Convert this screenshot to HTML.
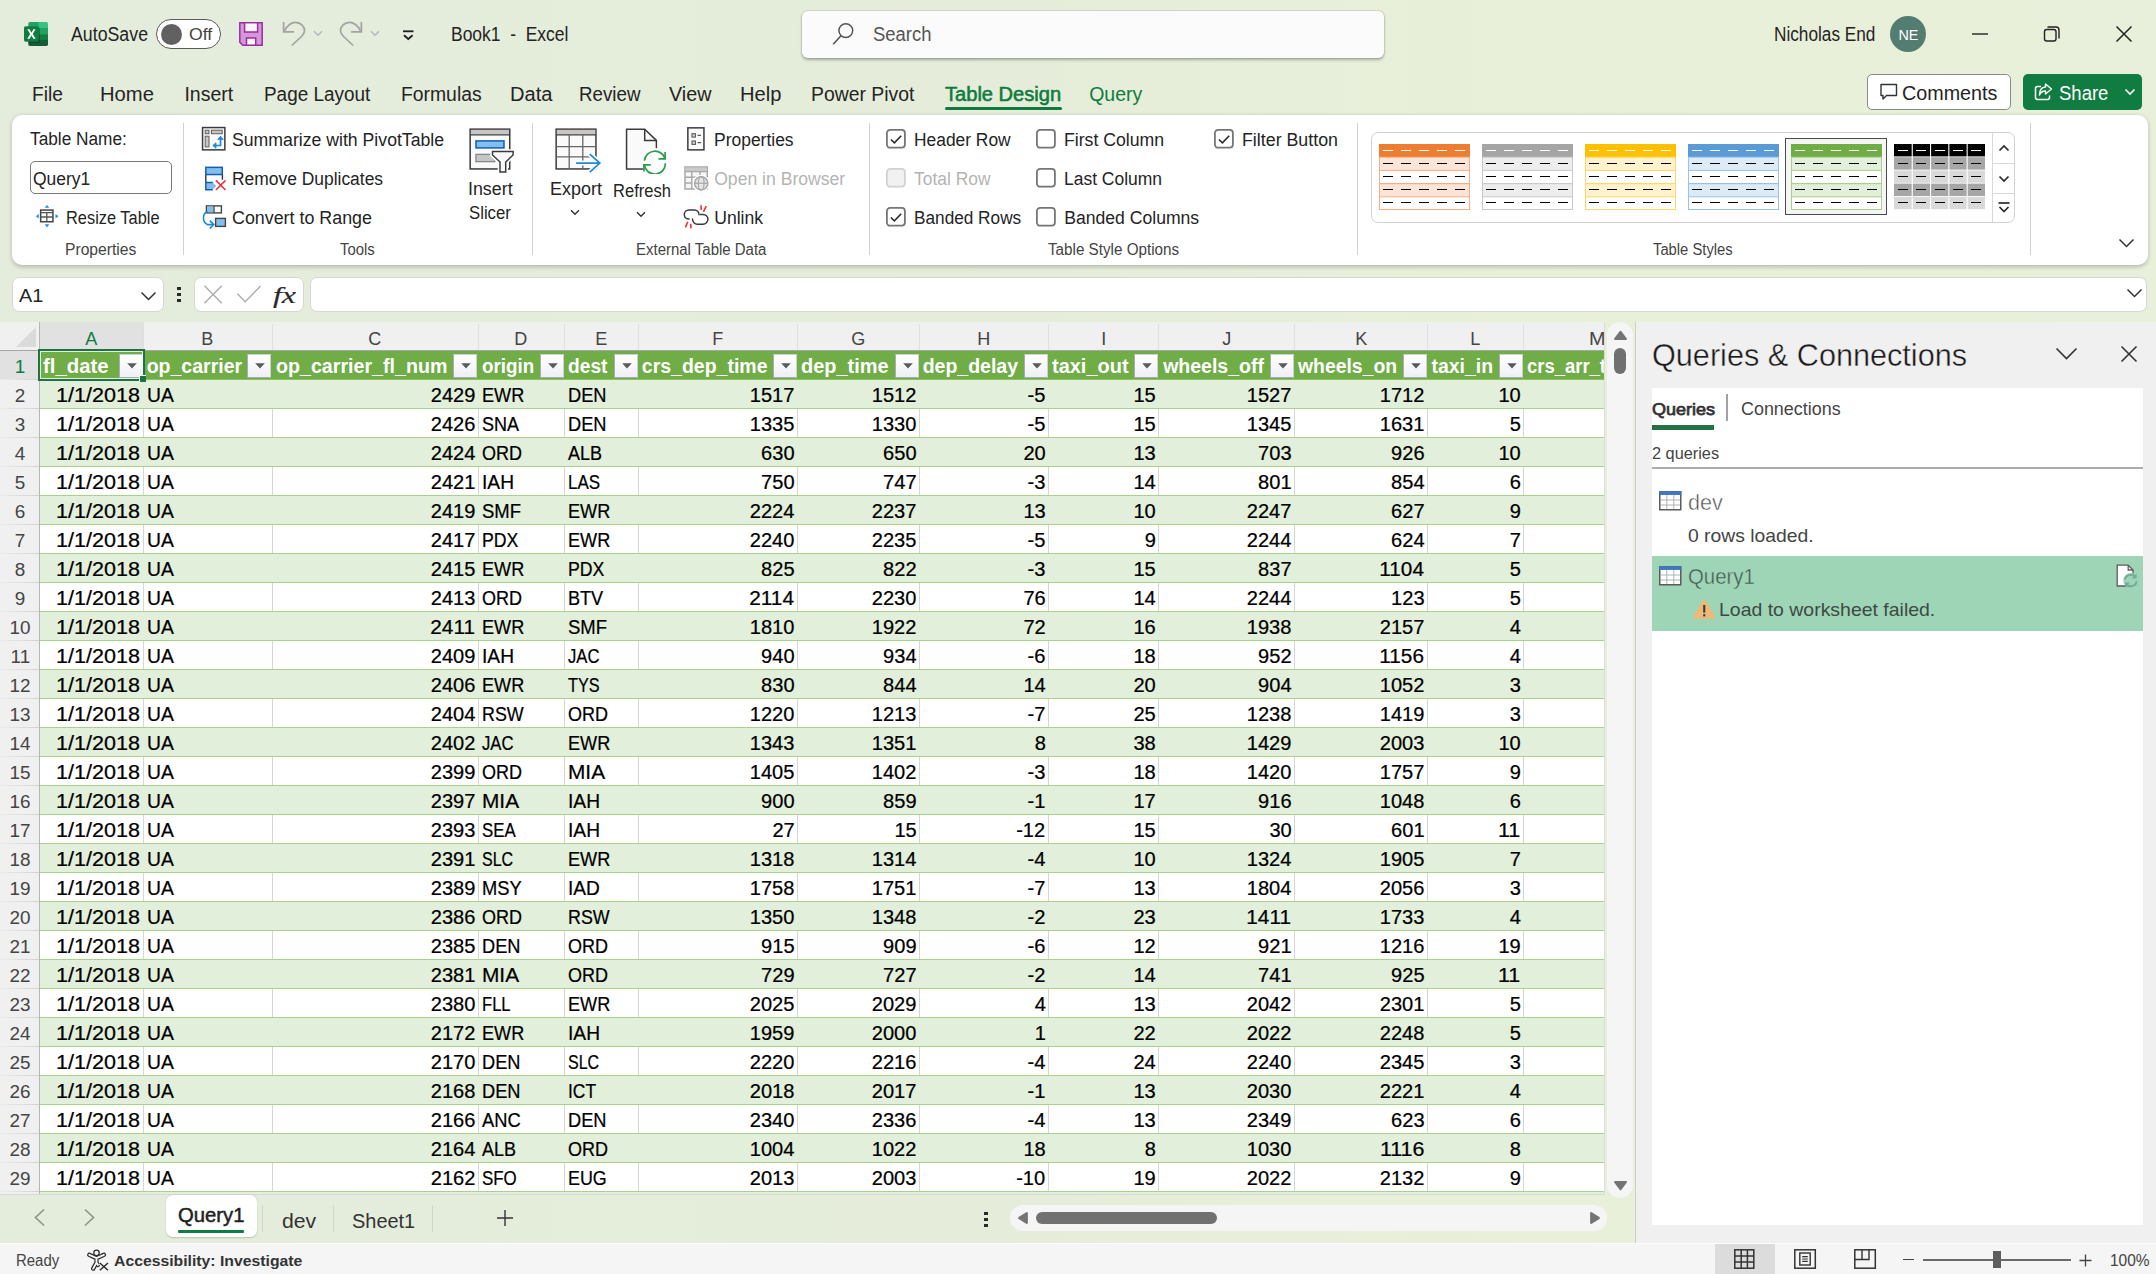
<!DOCTYPE html>
<html><head><meta charset="utf-8"><title>Book1 - Excel</title><style>html,body{margin:0;padding:0}
body{width:2156px;height:1274px;position:relative;overflow:hidden;background:linear-gradient(90deg,#e4ecdc 0%,#e5edda 45%,#e9f0d9 75%,#e8efda 100%);font-family:"Liberation Sans",sans-serif;}
.a{position:absolute;display:block}
.t{position:absolute;white-space:pre;display:block}
</style></head><body>
<svg class="a" style="left:24px;top:22px;" width="24" height="24" viewBox="0 0 24 24"><path d="M6 0 H14.9 V6 H4.3 V1.7 Q4.3 0 6 0 Z" fill="#21a366"/><path d="M14.9 0 H22.3 Q24 0 24 1.7 V6 H14.9 Z" fill="#33c481"/>
<rect x="4.3" y="6" width="10.6" height="6.1" fill="#107c41"/><rect x="14.9" y="6" width="9.1" height="6.1" fill="#21a366"/>
<rect x="4.3" y="12.1" width="10.6" height="6.1" fill="#185c37"/><rect x="14.9" y="12.1" width="9.1" height="6.1" fill="#107c41"/>
<path d="M4.3 17.9 H24 V22.3 Q24 24 22.3 24 H6 Q4.3 24 4.3 22.3 Z" fill="#185c37"/>
<path d="M4.3 5.3 H14.3 Q16 5.3 16 7 V19 Q16 20.7 14.3 20.7 H4.3 Z" fill="#000" opacity=".28"/>
<rect x="0" y="4.3" width="15" height="15.4" rx="1.7" fill="#107c41"/>
<path d="M3.3 7.3 H5.6 L7.5 10.7 L9.4 7.3 H11.6 L8.7 12 L11.7 16.8 H9.4 L7.5 13.4 L5.6 16.8 H3.2 L6.2 12 Z" fill="#fff"/></svg>
<span class="t" style="left:70.80px;top:25px;font-size:19.5px;line-height:19.5px;color:#242424;transform:scaleX(0.9106);transform-origin:0 50%;">AutoSave</span>
<div class="a" style="left:156px;top:19px;width:65px;height:30px;background:#fff;border:1.2px solid #5a5a5a;border-radius:15px;box-sizing:border-box;"></div>
<div class="a" style="left:161px;top:23.5px;width:21px;height:21px;background:#616161;border-radius:50%;"></div>
<span class="t" style="left:188.60px;top:27px;font-size:15.8px;line-height:15.8px;color:#444;transform:scaleX(1.1163);transform-origin:0 50%;">Off</span>
<svg class="a" style="left:239px;top:22px;" width="24" height="24" viewBox="0 0 24 24"><path d="M0.8 0.7 H23.2 V23.2 H3.8 L0.8 20.2 Z" fill="#d696dc" stroke="#9a2e9e" stroke-width="1.5" stroke-linejoin="miter"/>
<rect x="5.6" y="0.7" width="13" height="9.3" fill="#f8f6f8" stroke="#9a2e9e" stroke-width="1.5"/>
<rect x="7.5" y="16" width="9.2" height="7.2" fill="#f8f6f8" stroke="#9a2e9e" stroke-width="1.5"/></svg>
<svg class="a" style="left:282px;top:21px;" width="26" height="26" viewBox="0 0 26 26"><path d="M1.6 0.9 V10.8 H12" fill="none" stroke="#a3a3a3" stroke-width="1.7"/>
<path d="M2.3 10.2 C5 4.2 10 1.3 13.5 1.4 C19 1.6 22.8 5.6 22.5 10 C22.3 12.4 21 14 19.5 15.5 L9.8 24.5" fill="none" stroke="#a3a3a3" stroke-width="1.7"/></svg>
<svg class="a" style="left:313px;top:30px;" width="10" height="7" viewBox="0 0 10 7"><path d="M1 1.3 L5 5.3 L9 1.3" fill="none" stroke="#b9b4bb" stroke-width="1.4"/></svg>
<svg class="a" style="left:339px;top:21px;" width="26" height="26" viewBox="0 0 26 26"><path d="M22.4 0.9 V10.8 H12" fill="none" stroke="#a3a3a3" stroke-width="1.7"/>
<path d="M21.7 10.2 C19 4.2 14 1.3 10.5 1.4 C5 1.6 1.2 5.6 1.5 10 C1.7 12.4 3 14 4.5 15.5 L14.2 24.5" fill="none" stroke="#a3a3a3" stroke-width="1.7"/></svg>
<svg class="a" style="left:370px;top:30px;" width="10" height="7" viewBox="0 0 10 7"><path d="M1 1.3 L5 5.3 L9 1.3" fill="none" stroke="#b9b4bb" stroke-width="1.4"/></svg>
<svg class="a" style="left:401px;top:29px;" width="14" height="12" viewBox="0 0 14 12"><path d="M2 2.3 H12.5" stroke="#1f1f1f" stroke-width="1.8"/><path d="M3 6.3 L7.3 10 L11.6 6.3" fill="none" stroke="#1f1f1f" stroke-width="1.8"/></svg>
<span class="t" style="left:451.40px;top:25px;font-size:19.5px;line-height:19.5px;color:#242424;transform:scaleX(0.8952);transform-origin:0 50%;">Book1  -  Excel</span>
<div class="a" style="left:801.5px;top:10.5px;width:582px;height:47px;background:#fbfbfb;border-radius:6px;box-shadow:0 0 0 1px rgba(0,0,0,.06),0 1.5px 3px rgba(0,0,0,.28);"></div>
<svg class="a" style="left:831px;top:22px;" width="24" height="24" viewBox="0 0 24 24"><circle cx="14.8" cy="8.6" r="6.9" fill="none" stroke="#555" stroke-width="1.5"/><path d="M10 13.7 L2.2 22.3" stroke="#555" stroke-width="1.6"/></svg>
<span class="t" style="left:873.40px;top:25px;font-size:19.5px;line-height:19.5px;color:#555;transform:scaleX(0.9452);transform-origin:0 50%;">Search</span>
<span class="t" style="left:1773.90px;top:25px;font-size:19.5px;line-height:19.5px;color:#242424;transform:scaleX(0.8825);transform-origin:0 50%;">Nicholas End</span>
<div class="a" style="left:1890px;top:16px;width:36px;height:36px;background:#547d72;border-radius:50%;"></div>
<span class="t" style="left:1897.58px;top:27px;font-size:15px;line-height:15px;color:#fff;transform:scaleX(0.9598);transform-origin:50% 50%;">NE</span>
<svg class="a" style="left:1970px;top:24px;" width="20" height="20" viewBox="0 0 20 20"><path d="M2 10 H18" stroke="#222" stroke-width="1.4"/></svg>
<svg class="a" style="left:2042px;top:24px;" width="20" height="20" viewBox="0 0 20 20"><rect x="2.5" y="5.5" width="11.5" height="11.5" rx="2.2" fill="none" stroke="#222" stroke-width="1.4"/><path d="M5.5 3 H14 Q17 3 17 6 V14.5" fill="none" stroke="#222" stroke-width="1.4"/></svg>
<svg class="a" style="left:2114px;top:24px;" width="20" height="20" viewBox="0 0 20 20"><path d="M2.5 2.5 L17.5 17.5 M17.5 2.5 L2.5 17.5" stroke="#222" stroke-width="1.5"/></svg>
<span class="t" style="left:31.90px;top:85px;font-size:19.5px;line-height:19.5px;color:#242424;transform:scaleX(0.9834);transform-origin:0 50%;">File</span>
<span class="t" style="left:100.40px;top:85px;font-size:19.5px;line-height:19.5px;color:#242424;transform:scaleX(1.0362);transform-origin:0 50%;">Home</span>
<span class="t" style="left:184.40px;top:85px;font-size:19.5px;line-height:19.5px;color:#242424;">Insert</span>
<span class="t" style="left:264.40px;top:85px;font-size:19.5px;line-height:19.5px;color:#242424;transform:scaleX(0.9698);transform-origin:0 50%;">Page Layout</span>
<span class="t" style="left:401.40px;top:85px;font-size:19.5px;line-height:19.5px;color:#242424;transform:scaleX(0.9918);transform-origin:0 50%;">Formulas</span>
<span class="t" style="left:510.40px;top:85px;font-size:19.5px;line-height:19.5px;color:#242424;transform:scaleX(1.0294);transform-origin:0 50%;">Data</span>
<span class="t" style="left:579.40px;top:85px;font-size:19.5px;line-height:19.5px;color:#242424;transform:scaleX(0.9603);transform-origin:0 50%;">Review</span>
<span class="t" style="left:669.40px;top:85px;font-size:19.5px;line-height:19.5px;color:#242424;transform:scaleX(1.0116);transform-origin:0 50%;">View</span>
<span class="t" style="left:740.40px;top:85px;font-size:19.5px;line-height:19.5px;color:#242424;transform:scaleX(1.0323);transform-origin:0 50%;">Help</span>
<span class="t" style="left:811.40px;top:85px;font-size:19.5px;line-height:19.5px;color:#242424;transform:scaleX(0.9938);transform-origin:0 50%;">Power Pivot</span>
<span class="t" style="left:945.20px;top:85px;font-size:19.5px;line-height:19.5px;color:#0f7b3f;transform:scaleX(1.0298);transform-origin:0 50%;-webkit-text-stroke:0.55px #0f7b3f;">Table Design</span>
<div class="a" style="left:945px;top:106.6px;width:117px;height:3.2px;background:#0f7b3f;border-radius:1.6px;"></div>
<span class="t" style="left:1089.20px;top:85px;font-size:19.5px;line-height:19.5px;color:#0f7b3f;">Query</span>
<div class="a" style="left:1867px;top:74px;width:144px;height:36px;background:#fff;border:1px solid #8a8a8a;border-radius:5px;box-sizing:border-box;"></div>
<svg class="a" style="left:1879px;top:82px;" width="20" height="20" viewBox="0 0 20 20"><path d="M2 2.5 H17.5 V13.5 H7.5 L4 17 V13.5 H2 Z" fill="none" stroke="#333" stroke-width="1.4" stroke-linejoin="round"/></svg>
<span class="t" style="left:1902.40px;top:84px;font-size:19.5px;line-height:19.5px;color:#242424;transform:scaleX(1.0119);transform-origin:0 50%;">Comments</span>
<div class="a" style="left:2023px;top:74px;width:119px;height:36px;background:#107c41;border-radius:5px;"></div>
<svg class="a" style="left:2033px;top:82px;" width="22" height="20" viewBox="0 0 22 20"><path d="M8 4.5 H4.5 Q2.5 4.5 2.5 6.5 V15.5 Q2.5 17.5 4.5 17.5 H14.5 Q16.5 17.5 16.5 15.5 V13.5" fill="none" stroke="#fff" stroke-width="1.5"/><path d="M12.5 2 L18.5 7 L12.5 12 V9 Q8 9 6.5 13 Q6.5 5.5 12.5 5 Z" fill="none" stroke="#fff" stroke-width="1.4" stroke-linejoin="round"/></svg>
<span class="t" style="left:2059.40px;top:84px;font-size:19.5px;line-height:19.5px;color:#fff;transform:scaleX(0.9493);transform-origin:0 50%;">Share</span>
<svg class="a" style="left:2124px;top:88px;" width="12" height="9" viewBox="0 0 12 9"><path d="M1.5 1.5 L6 6 L10.5 1.5" fill="none" stroke="#fff" stroke-width="1.6"/></svg>
<div class="a" style="left:12px;top:115px;width:2135.5px;height:149.5px;background:#fff;border-radius:10px;box-shadow:0 1.5px 4px rgba(0,0,0,.22);"></div>
<div class="a" style="left:183.0px;top:122.5px;width:1.2px;height:132.5px;background:#d2d2d2;"></div>
<div class="a" style="left:531.9px;top:122.5px;width:1.2px;height:132.5px;background:#d2d2d2;"></div>
<div class="a" style="left:868.8px;top:122.5px;width:1.2px;height:132.5px;background:#d2d2d2;"></div>
<div class="a" style="left:1357.2px;top:122.5px;width:1.2px;height:132.5px;background:#d2d2d2;"></div>
<div class="a" style="left:2029.9px;top:122.5px;width:1.2px;height:132.5px;background:#d2d2d2;"></div>
<span class="t" style="left:29.90px;top:131px;font-size:17.6px;line-height:17.6px;color:#242424;transform:scaleX(0.9807);transform-origin:0 50%;">Table Name:</span>
<div class="a" style="left:30.3px;top:161.2px;width:141.7px;height:32.4px;background:#fff;border:1px solid #7a7a7a;border-radius:5px;box-sizing:border-box;"></div>
<span class="t" style="left:33.10px;top:171px;font-size:17.6px;line-height:17.6px;color:#242424;transform:scaleX(0.9928);transform-origin:0 50%;">Query1</span>
<svg class="a" style="left:35px;top:204px;" width="24" height="25" viewBox="0 0 24 25"><rect x="5.65" y="6.05" width="12.3" height="11.7" fill="#fafafa" stroke="#444" stroke-width="1.5"/>
<path d="M5.6 8.6 H18 M5.6 13 H18 M11.8 8.6 V17.8" stroke="#555" stroke-width="1.3"/>
<path d="M12 0.9 L14.3 3.8 H9.7 Z M12 23.4 L14.3 20.3 H9.7 Z M0.8 12.2 L3.8 9.9 V14.5 Z M23.6 12.2 L20.5 9.9 V14.5 Z" fill="#2e8fd8"/></svg>
<span class="t" style="left:66.20px;top:210px;font-size:17.6px;line-height:17.6px;color:#242424;transform:scaleX(0.9318);transform-origin:0 50%;">Resize Table</span>
<span class="t" style="left:64.70px;top:242px;font-size:15.6px;line-height:15.6px;color:#444;transform:scaleX(1.0042);transform-origin:0 50%;">Properties</span>
<svg class="a" style="left:201.3px;top:126.3px;" width="26" height="26" viewBox="0 0 26 26"><rect x="1.55" y="1.55" width="22.3" height="22.3" fill="#fafafa" stroke="#3b3b3b" stroke-width="1.5"/>
<rect x="4.2" y="4.2" width="3.8" height="3.5" fill="#c8c6c4" stroke="#5f5f5f" stroke-width="1"/><rect x="10.4" y="4.2" width="10.8" height="3.5" fill="#c8c6c4" stroke="#5f5f5f" stroke-width="1"/>
<rect x="4.2" y="10.2" width="3.8" height="10.7" fill="#c8c6c4" stroke="#5f5f5f" stroke-width="1"/>
<path d="M19.5 11.5 V19.5 H13" fill="none" stroke="#1e8ad2" stroke-width="1.7"/><path d="M16.7 13.4 L19.5 10.2 L22.3 13.4 Z M15 16.7 L11.8 19.5 L15 22.3 Z" fill="#1e8ad2" stroke="#1e8ad2" stroke-width="0.8" stroke-linejoin="round"/></svg>
<span class="t" style="left:232.00px;top:132px;font-size:17.6px;line-height:17.6px;color:#242424;transform:scaleX(1.0043);transform-origin:0 50%;">Summarize with PivotTable</span>
<svg class="a" style="left:204px;top:165.5px;" width="23" height="26" viewBox="0 0 23 26"><path d="M1.8 9 V16 M18.4 9 V13.8" stroke="#333" stroke-width="1.4"/>
<rect x="1.85" y="1.35" width="16.4" height="7.2" fill="#83beec" stroke="#0f5fb5" stroke-width="1.5"/>
<path d="M1.85 16.5 H8.6 L12.3 20.1 L8.6 23.7 H1.85 Z" fill="#83beec"/><path d="M8.8 16.5 H1.85 V23.7 H8.8" fill="none" stroke="#0f5fb5" stroke-width="1.5"/>
<path d="M11.9 14.4 L21.5 24 M21.5 14.4 L11.9 24" stroke="#e8323c" stroke-width="1.5"/></svg>
<span class="t" style="left:232.00px;top:171px;font-size:17.6px;line-height:17.6px;color:#242424;transform:scaleX(0.9902);transform-origin:0 50%;">Remove Duplicates</span>
<svg class="a" style="left:201.5px;top:205px;" width="25" height="24" viewBox="0 0 25 24"><rect x="4.4" y="0.9" width="15" height="7" fill="#fff" stroke="#444" stroke-width="1.4"/><rect x="5.1" y="1.6" width="6.3" height="5.6" fill="#83beec"/><path d="M12 1 V8" stroke="#444" stroke-width="1.3"/>
<rect x="13.6" y="13.4" width="9.8" height="8" fill="#83beec" stroke="#444" stroke-width="1.4"/>
<path d="M5.8 6.6 C0.6 8, -0.4 16.5, 5.5 19.6 H11" fill="none" stroke="#1e8ad2" stroke-width="1.6"/><path d="M7.8 15.6 L11.8 19.6 L7.8 23.6" fill="none" stroke="#1e8ad2" stroke-width="1.6"/></svg>
<span class="t" style="left:232.00px;top:210px;font-size:17.6px;line-height:17.6px;color:#242424;transform:scaleX(1.0149);transform-origin:0 50%;">Convert to Range</span>
<svg class="a" style="left:468px;top:127px;" width="47" height="47" viewBox="0 0 47 47"><rect x="2.15" y="2.15" width="39.6" height="39.8" fill="#fafafa" stroke="#3b3b3b" stroke-width="1.5"/>
<rect x="2.9" y="2.9" width="38.1" height="4.4" fill="#c8c6c4"/><path d="M2 7.9 H42" stroke="#3b3b3b" stroke-width="1.4"/>
<rect x="8" y="13.9" width="28" height="7" fill="#83beec" stroke="#0f5fb5" stroke-width="1.5"/>
<rect x="7.9" y="27.3" width="19" height="7.4" fill="#c8c6c4" stroke="#7a7a7a" stroke-width="1.1"/>
<path d="M24.5 24.6 H45.1 V28 L37.7 35 V45 H32 V35 L24.5 28 Z" fill="#fff" stroke="#fff" stroke-width="4.5"/>
<path d="M24.5 24.6 H45.1 V28 L37.7 35 V45 H32 V35 L24.5 28 Z" fill="#fafafa" stroke="#3b3b3b" stroke-width="1.5" stroke-linejoin="miter"/></svg>
<span class="t" style="left:468.20px;top:181px;font-size:17.6px;line-height:17.6px;color:#242424;transform:scaleX(1.0132);transform-origin:0 50%;">Insert</span>
<span class="t" style="left:468.90px;top:205px;font-size:17.6px;line-height:17.6px;color:#242424;transform:scaleX(0.9520);transform-origin:0 50%;">Slicer</span>
<span class="t" style="left:340.40px;top:242px;font-size:15.6px;line-height:15.6px;color:#444;transform:scaleX(0.9556);transform-origin:0 50%;">Tools</span>
<svg class="a" style="left:554px;top:127px;" width="48" height="47" viewBox="0 0 48 47"><rect x="2.15" y="2.15" width="39.8" height="39.8" fill="#fafafa" stroke="#3b3b3b" stroke-width="1.5"/>
<rect x="2.9" y="2.9" width="38.3" height="4.4" fill="#c8c6c4"/><path d="M2 7.9 H42" stroke="#3b3b3b" stroke-width="1.4"/>
<path d="M2 19.7 H42 M2 29.9 H42 M15.2 8 V42 M28.8 8 V42" stroke="#666" stroke-width="1.3"/>
<path d="M22.1 36.1 H45.8 M35.8 27.2 L45.8 36.1 L35.8 45.2" fill="none" stroke="#fafafa" stroke-width="5"/>
<path d="M22.1 36.1 H45.3 M35.8 27.2 L45.8 36.1 L35.8 45.2" fill="none" stroke="#1e8ad2" stroke-width="1.7"/></svg>
<span class="t" style="left:549.90px;top:181px;font-size:17.6px;line-height:17.6px;color:#242424;transform:scaleX(1.0203);transform-origin:0 50%;">Export</span>
<svg class="a" style="left:570px;top:208.5px;" width="10" height="7" viewBox="0 0 10 7"><path d="M1 1.2 L5 5.2 L9 1.2" fill="none" stroke="#333" stroke-width="1.4"/></svg>
<svg class="a" style="left:624px;top:127px;" width="44" height="47" viewBox="0 0 44 47"><path d="M2.55 2.15 H20.7 L32.4 13.4 V41.95 H2.55 Z" fill="#fafafa" stroke="#3b3b3b" stroke-width="1.5"/><path d="M20.7 2.15 V13.4 H32.4" fill="none" stroke="#3b3b3b" stroke-width="1.5"/>
<circle cx="30.9" cy="34.8" r="13.8" fill="#fff"/>
<path d="M20.4 33.6 A10.6 10.6 0 0 1 41.1 31.8 M41.4 36.2 A10.6 10.6 0 0 1 20.3 37.9" fill="none" stroke="#2a9d4b" stroke-width="1.7"/>
<path d="M41.1 25.1 V31.8 H34.5 M19.9 44.5 V37.9 H26.8" fill="none" stroke="#2a9d4b" stroke-width="1.7"/></svg>
<span class="t" style="left:613.30px;top:183px;font-size:17.6px;line-height:17.6px;color:#242424;transform:scaleX(0.9395);transform-origin:0 50%;">Refresh</span>
<svg class="a" style="left:636px;top:210.5px;" width="10" height="7" viewBox="0 0 10 7"><path d="M1 1.2 L5 5.2 L9 1.2" fill="none" stroke="#333" stroke-width="1.4"/></svg>
<svg class="a" style="left:686px;top:126px;" width="21" height="26" viewBox="0 0 21 26"><rect x="1.85" y="1.85" width="16.1" height="22" fill="#fafafa" stroke="#3b3b3b" stroke-width="1.5"/>
<rect x="6" y="7.7" width="3.4" height="3.4" fill="#d8d8d8" stroke="#5a5a5a" stroke-width="1.1"/><rect x="6" y="15" width="3.4" height="3.4" fill="#d8d8d8" stroke="#5a5a5a" stroke-width="1.1"/>
<path d="M11.5 9.4 H15 M11.5 16.7 H15" stroke="#5a5a5a" stroke-width="1.3"/></svg>
<span class="t" style="left:714.20px;top:132px;font-size:17.6px;line-height:17.6px;color:#242424;transform:scaleX(0.9923);transform-origin:0 50%;">Properties</span>
<svg class="a" style="left:684px;top:166px;" width="26" height="26" viewBox="0 0 26 26"><rect x="1" y="1" width="22.3" height="22" fill="#f6f6f6" stroke="#a8a8a8" stroke-width="1.5"/><rect x="1.6" y="1.6" width="21" height="3.4" fill="#c9c9c9"/>
<path d="M1 5.6 H23.3 M1 11.3 H23.3 M1 17 H12 M7.8 5.6 V23 M16 5.6 V10" stroke="#a8a8a8" stroke-width="1.4"/>
<circle cx="17.2" cy="17.3" r="8.6" fill="#fff"/>
<circle cx="17.2" cy="17.3" r="6.6" fill="#e6e6e6" stroke="#a8a8a8" stroke-width="1.5"/><ellipse cx="17.2" cy="17.3" rx="2.9" ry="6.6" fill="none" stroke="#a8a8a8" stroke-width="1.2"/><path d="M10.6 17.3 H23.8" stroke="#a8a8a8" stroke-width="1.2"/></svg>
<span class="t" style="left:714.20px;top:171px;font-size:17.6px;line-height:17.6px;color:#b4b4b4;">Open in Browser</span>
<svg class="a" style="left:683px;top:204px;" width="27" height="26" viewBox="0 0 27 26"><path d="M6.6 15 H5.8 A4.5 4.5 0 0 1 5.8 6 H11.5 A4.5 4.5 0 0 1 16 10.5 V11.2" fill="none" stroke="#3b3b3b" stroke-width="1.5"/>
<path d="M9.5 14.6 V15.3 A4.9 4.9 0 0 0 14.4 20.2 H20 A4.9 4.9 0 0 0 20 10.4 H16.9" fill="none" stroke="#3b3b3b" stroke-width="1.5"/>
<path d="M18 1.3 L18.3 6 M23.2 2.2 L20.4 7.9 M4.8 17.8 L2.4 23.4 M7.7 19.7 L8 24.4" stroke="#e8323c" stroke-width="1.6"/></svg>
<span class="t" style="left:714.20px;top:210px;font-size:17.6px;line-height:17.6px;color:#242424;">Unlink</span>
<span class="t" style="left:635.70px;top:242px;font-size:15.6px;line-height:15.6px;color:#444;transform:scaleX(0.9605);transform-origin:0 50%;">External Table Data</span>
<svg class="a" style="left:886.1px;top:129.1px;" width="20" height="20" viewBox="0 0 20 20"><rect x="0.9" y="0.9" width="18" height="17.8" rx="3.2" fill="#fff" stroke="#757575" stroke-width="1.8"/><path d="M4.9 10.5 L8.4 13.8 L15.2 6.8" fill="none" stroke="#2b2b2b" stroke-width="1.55"/></svg>
<span class="t" style="left:913.90px;top:132px;font-size:17.6px;line-height:17.6px;color:#242424;transform:scaleX(0.9885);transform-origin:0 50%;">Header Row</span>
<svg class="a" style="left:886.1px;top:168.2px;" width="20" height="20" viewBox="0 0 20 20"><rect x="0.9" y="0.9" width="18" height="17.8" rx="3.2" fill="#f1f1f1" stroke="#d2d2d2" stroke-width="1.8"/></svg>
<span class="t" style="left:913.90px;top:171px;font-size:17.6px;line-height:17.6px;color:#b4b4b4;transform:scaleX(0.9912);transform-origin:0 50%;">Total Row</span>
<svg class="a" style="left:886.1px;top:207.3px;" width="20" height="20" viewBox="0 0 20 20"><rect x="0.9" y="0.9" width="18" height="17.8" rx="3.2" fill="#fff" stroke="#757575" stroke-width="1.8"/><path d="M4.9 10.5 L8.4 13.8 L15.2 6.8" fill="none" stroke="#2b2b2b" stroke-width="1.55"/></svg>
<span class="t" style="left:913.90px;top:210px;font-size:17.6px;line-height:17.6px;color:#242424;transform:scaleX(0.9783);transform-origin:0 50%;">Banded Rows</span>
<svg class="a" style="left:1036.3px;top:129.1px;" width="20" height="20" viewBox="0 0 20 20"><rect x="0.9" y="0.9" width="18" height="17.8" rx="3.2" fill="#fff" stroke="#757575" stroke-width="1.8"/></svg>
<span class="t" style="left:1064.20px;top:132px;font-size:17.6px;line-height:17.6px;color:#242424;transform:scaleX(1.0045);transform-origin:0 50%;">First Column</span>
<svg class="a" style="left:1036.3px;top:168.2px;" width="20" height="20" viewBox="0 0 20 20"><rect x="0.9" y="0.9" width="18" height="17.8" rx="3.2" fill="#fff" stroke="#757575" stroke-width="1.8"/></svg>
<span class="t" style="left:1064.20px;top:171px;font-size:17.6px;line-height:17.6px;color:#242424;transform:scaleX(0.9929);transform-origin:0 50%;">Last Column</span>
<svg class="a" style="left:1036.3px;top:207.3px;" width="20" height="20" viewBox="0 0 20 20"><rect x="0.9" y="0.9" width="18" height="17.8" rx="3.2" fill="#fff" stroke="#757575" stroke-width="1.8"/></svg>
<span class="t" style="left:1064.20px;top:210px;font-size:17.6px;line-height:17.6px;color:#242424;">Banded Columns</span>
<svg class="a" style="left:1214.3px;top:129.1px;" width="20" height="20" viewBox="0 0 20 20"><rect x="0.9" y="0.9" width="18" height="17.8" rx="3.2" fill="#fff" stroke="#757575" stroke-width="1.8"/><path d="M4.9 10.5 L8.4 13.8 L15.2 6.8" fill="none" stroke="#2b2b2b" stroke-width="1.55"/></svg>
<span class="t" style="left:1242.10px;top:132px;font-size:17.6px;line-height:17.6px;color:#242424;transform:scaleX(1.0117);transform-origin:0 50%;">Filter Button</span>
<span class="t" style="left:1048.00px;top:242px;font-size:15.6px;line-height:15.6px;color:#444;transform:scaleX(0.9761);transform-origin:0 50%;">Table Style Options</span>
<div class="a" style="left:1371.2px;top:132.2px;width:643.6px;height:91px;background:#fff;border:1px solid #d2d2d2;border-radius:7px;box-sizing:border-box;"></div>
<div class="a" style="left:1992px;top:132.5px;width:1px;height:89.5px;background:#d8d8d8;"></div>
<div class="a" style="left:1992.5px;top:163px;width:21.5px;height:1px;background:#d8d8d8;"></div>
<div class="a" style="left:1992.5px;top:192.5px;width:21.5px;height:1px;background:#d8d8d8;"></div>
<div class="a" style="left:1785.3px;top:138.3px;width:102.2px;height:77.2px;background:#f5f5f5;border:1.3px solid #4a4a4a;box-sizing:border-box;"></div>
<svg class="a" style="left:1379px;top:144px;" width="91" height="66" viewBox="0 0 91 66"><rect x="0.5" y="0.5" width="90" height="65" fill="#fff" stroke="#f4b084"/><rect x="0" y="0" width="91" height="13.5" fill="#ed7d31"/><rect x="0.5" y="13.2" width="90" height="13.2" fill="#fce4d6" stroke="#f4b084"/><rect x="0.5" y="39.599999999999994" width="90" height="13.2" fill="#fce4d6" stroke="#f4b084"/><path d="M0.5 39.599999999999994 H90.5" stroke="#f4b084"/><rect x="4" y="6" width="10" height="1" fill="#fff"/><rect x="22" y="6" width="10" height="1" fill="#fff"/><rect x="40" y="6" width="10" height="1" fill="#fff"/><rect x="58" y="6" width="10" height="1" fill="#fff"/><rect x="76" y="6" width="10" height="1" fill="#fff"/><rect x="4" y="19" width="10" height="1" fill="#000"/><rect x="22" y="19" width="10" height="1" fill="#000"/><rect x="40" y="19" width="10" height="1" fill="#000"/><rect x="58" y="19" width="10" height="1" fill="#000"/><rect x="76" y="19" width="10" height="1" fill="#000"/><rect x="4" y="32" width="10" height="1" fill="#000"/><rect x="22" y="32" width="10" height="1" fill="#000"/><rect x="40" y="32" width="10" height="1" fill="#000"/><rect x="58" y="32" width="10" height="1" fill="#000"/><rect x="76" y="32" width="10" height="1" fill="#000"/><rect x="4" y="45" width="10" height="1" fill="#000"/><rect x="22" y="45" width="10" height="1" fill="#000"/><rect x="40" y="45" width="10" height="1" fill="#000"/><rect x="58" y="45" width="10" height="1" fill="#000"/><rect x="76" y="45" width="10" height="1" fill="#000"/><rect x="4" y="58" width="10" height="1" fill="#000"/><rect x="22" y="58" width="10" height="1" fill="#000"/><rect x="40" y="58" width="10" height="1" fill="#000"/><rect x="58" y="58" width="10" height="1" fill="#000"/><rect x="76" y="58" width="10" height="1" fill="#000"/></svg>
<svg class="a" style="left:1482px;top:144px;" width="91" height="66" viewBox="0 0 91 66"><rect x="0.5" y="0.5" width="90" height="65" fill="#fff" stroke="#c9c9c9"/><rect x="0" y="0" width="91" height="13.5" fill="#a5a5a5"/><rect x="0.5" y="13.2" width="90" height="13.2" fill="#ededed" stroke="#c9c9c9"/><rect x="0.5" y="39.599999999999994" width="90" height="13.2" fill="#ededed" stroke="#c9c9c9"/><path d="M0.5 39.599999999999994 H90.5" stroke="#c9c9c9"/><rect x="4" y="6" width="10" height="1" fill="#fff"/><rect x="22" y="6" width="10" height="1" fill="#fff"/><rect x="40" y="6" width="10" height="1" fill="#fff"/><rect x="58" y="6" width="10" height="1" fill="#fff"/><rect x="76" y="6" width="10" height="1" fill="#fff"/><rect x="4" y="19" width="10" height="1" fill="#000"/><rect x="22" y="19" width="10" height="1" fill="#000"/><rect x="40" y="19" width="10" height="1" fill="#000"/><rect x="58" y="19" width="10" height="1" fill="#000"/><rect x="76" y="19" width="10" height="1" fill="#000"/><rect x="4" y="32" width="10" height="1" fill="#000"/><rect x="22" y="32" width="10" height="1" fill="#000"/><rect x="40" y="32" width="10" height="1" fill="#000"/><rect x="58" y="32" width="10" height="1" fill="#000"/><rect x="76" y="32" width="10" height="1" fill="#000"/><rect x="4" y="45" width="10" height="1" fill="#000"/><rect x="22" y="45" width="10" height="1" fill="#000"/><rect x="40" y="45" width="10" height="1" fill="#000"/><rect x="58" y="45" width="10" height="1" fill="#000"/><rect x="76" y="45" width="10" height="1" fill="#000"/><rect x="4" y="58" width="10" height="1" fill="#000"/><rect x="22" y="58" width="10" height="1" fill="#000"/><rect x="40" y="58" width="10" height="1" fill="#000"/><rect x="58" y="58" width="10" height="1" fill="#000"/><rect x="76" y="58" width="10" height="1" fill="#000"/></svg>
<svg class="a" style="left:1585px;top:144px;" width="91" height="66" viewBox="0 0 91 66"><rect x="0.5" y="0.5" width="90" height="65" fill="#fff" stroke="#ffd966"/><rect x="0" y="0" width="91" height="13.5" fill="#ffc000"/><rect x="0.5" y="13.2" width="90" height="13.2" fill="#fff2cc" stroke="#ffd966"/><rect x="0.5" y="39.599999999999994" width="90" height="13.2" fill="#fff2cc" stroke="#ffd966"/><path d="M0.5 39.599999999999994 H90.5" stroke="#ffd966"/><rect x="4" y="6" width="10" height="1" fill="#fff"/><rect x="22" y="6" width="10" height="1" fill="#fff"/><rect x="40" y="6" width="10" height="1" fill="#fff"/><rect x="58" y="6" width="10" height="1" fill="#fff"/><rect x="76" y="6" width="10" height="1" fill="#fff"/><rect x="4" y="19" width="10" height="1" fill="#000"/><rect x="22" y="19" width="10" height="1" fill="#000"/><rect x="40" y="19" width="10" height="1" fill="#000"/><rect x="58" y="19" width="10" height="1" fill="#000"/><rect x="76" y="19" width="10" height="1" fill="#000"/><rect x="4" y="32" width="10" height="1" fill="#000"/><rect x="22" y="32" width="10" height="1" fill="#000"/><rect x="40" y="32" width="10" height="1" fill="#000"/><rect x="58" y="32" width="10" height="1" fill="#000"/><rect x="76" y="32" width="10" height="1" fill="#000"/><rect x="4" y="45" width="10" height="1" fill="#000"/><rect x="22" y="45" width="10" height="1" fill="#000"/><rect x="40" y="45" width="10" height="1" fill="#000"/><rect x="58" y="45" width="10" height="1" fill="#000"/><rect x="76" y="45" width="10" height="1" fill="#000"/><rect x="4" y="58" width="10" height="1" fill="#000"/><rect x="22" y="58" width="10" height="1" fill="#000"/><rect x="40" y="58" width="10" height="1" fill="#000"/><rect x="58" y="58" width="10" height="1" fill="#000"/><rect x="76" y="58" width="10" height="1" fill="#000"/></svg>
<svg class="a" style="left:1688px;top:144px;" width="91" height="66" viewBox="0 0 91 66"><rect x="0.5" y="0.5" width="90" height="65" fill="#fff" stroke="#9bc2e6"/><rect x="0" y="0" width="91" height="13.5" fill="#5b9bd5"/><rect x="0.5" y="13.2" width="90" height="13.2" fill="#ddebf7" stroke="#9bc2e6"/><rect x="0.5" y="39.599999999999994" width="90" height="13.2" fill="#ddebf7" stroke="#9bc2e6"/><path d="M0.5 39.599999999999994 H90.5" stroke="#9bc2e6"/><rect x="4" y="6" width="10" height="1" fill="#fff"/><rect x="22" y="6" width="10" height="1" fill="#fff"/><rect x="40" y="6" width="10" height="1" fill="#fff"/><rect x="58" y="6" width="10" height="1" fill="#fff"/><rect x="76" y="6" width="10" height="1" fill="#fff"/><rect x="4" y="19" width="10" height="1" fill="#000"/><rect x="22" y="19" width="10" height="1" fill="#000"/><rect x="40" y="19" width="10" height="1" fill="#000"/><rect x="58" y="19" width="10" height="1" fill="#000"/><rect x="76" y="19" width="10" height="1" fill="#000"/><rect x="4" y="32" width="10" height="1" fill="#000"/><rect x="22" y="32" width="10" height="1" fill="#000"/><rect x="40" y="32" width="10" height="1" fill="#000"/><rect x="58" y="32" width="10" height="1" fill="#000"/><rect x="76" y="32" width="10" height="1" fill="#000"/><rect x="4" y="45" width="10" height="1" fill="#000"/><rect x="22" y="45" width="10" height="1" fill="#000"/><rect x="40" y="45" width="10" height="1" fill="#000"/><rect x="58" y="45" width="10" height="1" fill="#000"/><rect x="76" y="45" width="10" height="1" fill="#000"/><rect x="4" y="58" width="10" height="1" fill="#000"/><rect x="22" y="58" width="10" height="1" fill="#000"/><rect x="40" y="58" width="10" height="1" fill="#000"/><rect x="58" y="58" width="10" height="1" fill="#000"/><rect x="76" y="58" width="10" height="1" fill="#000"/></svg>
<svg class="a" style="left:1791px;top:144px;" width="91" height="66" viewBox="0 0 91 66"><rect x="0.5" y="0.5" width="90" height="65" fill="#fff" stroke="#a9d08e"/><rect x="0" y="0" width="91" height="13.5" fill="#70ad47"/><rect x="0.5" y="13.2" width="90" height="13.2" fill="#e2efda" stroke="#a9d08e"/><rect x="0.5" y="39.599999999999994" width="90" height="13.2" fill="#e2efda" stroke="#a9d08e"/><path d="M0.5 39.599999999999994 H90.5" stroke="#a9d08e"/><rect x="4" y="6" width="10" height="1" fill="#fff"/><rect x="22" y="6" width="10" height="1" fill="#fff"/><rect x="40" y="6" width="10" height="1" fill="#fff"/><rect x="58" y="6" width="10" height="1" fill="#fff"/><rect x="76" y="6" width="10" height="1" fill="#fff"/><rect x="4" y="19" width="10" height="1" fill="#000"/><rect x="22" y="19" width="10" height="1" fill="#000"/><rect x="40" y="19" width="10" height="1" fill="#000"/><rect x="58" y="19" width="10" height="1" fill="#000"/><rect x="76" y="19" width="10" height="1" fill="#000"/><rect x="4" y="32" width="10" height="1" fill="#000"/><rect x="22" y="32" width="10" height="1" fill="#000"/><rect x="40" y="32" width="10" height="1" fill="#000"/><rect x="58" y="32" width="10" height="1" fill="#000"/><rect x="76" y="32" width="10" height="1" fill="#000"/><rect x="4" y="45" width="10" height="1" fill="#000"/><rect x="22" y="45" width="10" height="1" fill="#000"/><rect x="40" y="45" width="10" height="1" fill="#000"/><rect x="58" y="45" width="10" height="1" fill="#000"/><rect x="76" y="45" width="10" height="1" fill="#000"/><rect x="4" y="58" width="10" height="1" fill="#000"/><rect x="22" y="58" width="10" height="1" fill="#000"/><rect x="40" y="58" width="10" height="1" fill="#000"/><rect x="58" y="58" width="10" height="1" fill="#000"/><rect x="76" y="58" width="10" height="1" fill="#000"/></svg>
<svg class="a" style="left:1894px;top:144px;" width="91" height="66" viewBox="0 0 91 66"><rect x="0" y="0.0" width="91" height="12.4" fill="#000"/><rect x="0" y="13.2" width="91" height="12.4" fill="#a6a6a6"/><rect x="0" y="26.4" width="91" height="12.4" fill="#d9d9d9"/><rect x="0" y="39.6" width="91" height="12.4" fill="#a6a6a6"/><rect x="0" y="52.8" width="91" height="12.4" fill="#d9d9d9"/><rect x="17.7" y="0" width="1.1" height="66" fill="#fff"/><rect x="36.0" y="0" width="1.1" height="66" fill="#fff"/><rect x="54.3" y="0" width="1.1" height="66" fill="#fff"/><rect x="72.6" y="0" width="1.1" height="66" fill="#fff"/><rect x="4" y="6" width="10" height="1" fill="#fff"/><rect x="22" y="6" width="10" height="1" fill="#fff"/><rect x="41" y="6" width="10" height="1" fill="#fff"/><rect x="59" y="6" width="10" height="1" fill="#fff"/><rect x="77" y="6" width="10" height="1" fill="#fff"/><rect x="4" y="19" width="10" height="1" fill="#000"/><rect x="22" y="19" width="10" height="1" fill="#000"/><rect x="41" y="19" width="10" height="1" fill="#000"/><rect x="59" y="19" width="10" height="1" fill="#000"/><rect x="77" y="19" width="10" height="1" fill="#000"/><rect x="4" y="32" width="10" height="1" fill="#000"/><rect x="22" y="32" width="10" height="1" fill="#000"/><rect x="41" y="32" width="10" height="1" fill="#000"/><rect x="59" y="32" width="10" height="1" fill="#000"/><rect x="77" y="32" width="10" height="1" fill="#000"/><rect x="4" y="45" width="10" height="1" fill="#000"/><rect x="22" y="45" width="10" height="1" fill="#000"/><rect x="41" y="45" width="10" height="1" fill="#000"/><rect x="59" y="45" width="10" height="1" fill="#000"/><rect x="77" y="45" width="10" height="1" fill="#000"/><rect x="4" y="58" width="10" height="1" fill="#000"/><rect x="22" y="58" width="10" height="1" fill="#000"/><rect x="41" y="58" width="10" height="1" fill="#000"/><rect x="59" y="58" width="10" height="1" fill="#000"/><rect x="77" y="58" width="10" height="1" fill="#000"/></svg>
<svg class="a" style="left:1997.5px;top:144px;" width="12" height="8" viewBox="0 0 12 8"><path d="M1.5 6.5 L6 2 L10.5 6.5" fill="none" stroke="#2b2b2b" stroke-width="1.75"/></svg>
<svg class="a" style="left:1997.5px;top:174.5px;" width="12" height="8" viewBox="0 0 12 8"><path d="M1.5 1.5 L6 6 L10.5 1.5" fill="none" stroke="#2b2b2b" stroke-width="1.75"/></svg>
<svg class="a" style="left:1996.5px;top:200.5px;" width="14" height="13" viewBox="0 0 14 13"><path d="M1.5 2 H12.5" stroke="#2b2b2b" stroke-width="1.7"/><path d="M2.5 6 L7 10.5 L11.5 6" fill="none" stroke="#2b2b2b" stroke-width="1.7"/></svg>
<span class="t" style="left:1653.40px;top:242px;font-size:15.6px;line-height:15.6px;color:#444;transform:scaleX(0.9476);transform-origin:0 50%;">Table Styles</span>
<svg class="a" style="left:2118px;top:238px;" width="17" height="11" viewBox="0 0 17 11"><path d="M1.5 1.5 L8.5 8.5 L15.5 1.5" fill="none" stroke="#333" stroke-width="1.5"/></svg>
<div class="a" style="left:12.4px;top:277px;width:151.2px;height:35px;background:#fff;border:1px solid #d4d8cf;border-radius:7px;box-sizing:border-box;"></div>
<span class="t" style="left:18.90px;top:288px;font-size:17.6px;line-height:17.6px;color:#242424;transform:scaleX(1.1241);transform-origin:0 50%;">A1</span>
<svg class="a" style="left:140px;top:291px;" width="17" height="11" viewBox="0 0 17 11"><path d="M1.5 1.5 L8.5 8.5 L15.5 1.5" fill="none" stroke="#333" stroke-width="1.5"/></svg>
<div class="a" style="left:177.2px;top:287px;width:3.7px;height:3px;background:#2a2a2a;"></div>
<div class="a" style="left:177.2px;top:293px;width:3.7px;height:3px;background:#2a2a2a;"></div>
<div class="a" style="left:177.2px;top:299px;width:3.7px;height:3px;background:#2a2a2a;"></div>
<div class="a" style="left:194px;top:277px;width:110px;height:35px;background:#fff;border:1px solid #d4d8cf;border-radius:7px;box-sizing:border-box;"></div>
<svg class="a" style="left:203px;top:285px;" width="20" height="20" viewBox="0 0 20 20"><path d="M1.4 0.8 L18.8 18.2 M18.8 0.8 L1.4 18.2" stroke="#adadad" stroke-width="1.4"/></svg>
<svg class="a" style="left:236px;top:285px;" width="26" height="20" viewBox="0 0 26 20"><path d="M1.4 8.8 L9.2 16.8 L24.6 0.9" fill="none" stroke="#adadad" stroke-width="1.4"/></svg>
<span class="t" style="left:273.30px;top:283px;font-size:24px;line-height:24px;color:#2a2a2a;font-family:'Liberation Serif',serif;font-style:italic;transform:scaleX(1.3280);transform-origin:0 50%;-webkit-text-stroke:0.2px #2a2a2a;">fx</span>
<div class="a" style="left:310.2px;top:277px;width:1837.3px;height:35px;background:#fff;border:1px solid #d4d8cf;border-radius:7px;box-sizing:border-box;"></div>
<svg class="a" style="left:2125.5px;top:288px;" width="17" height="11" viewBox="0 0 17 11"><path d="M1.5 1.5 L8.5 8.5 L15.5 1.5" fill="none" stroke="#333" stroke-width="1.5"/></svg>
<div class="a" style="left:1635px;top:322px;width:521px;height:921px;background:#f0f0f0;"></div>
<div class="a" style="left:1635px;top:322px;width:1px;height:921px;background:#cdcdcd;"></div>
<span class="t" style="left:1652.00px;top:340px;font-size:30.5px;line-height:30.5px;color:#1a1a1a;transform:scaleX(1.0046);transform-origin:0 50%;-webkit-text-stroke:0.4px #f0f0f0;">Queries &amp; Connections</span>
<svg class="a" style="left:2055px;top:347px;" width="23" height="14" viewBox="0 0 23 14"><path d="M1.5 1.5 L11.5 11.5 L21.5 1.5" fill="none" stroke="#333" stroke-width="1.6"/></svg>
<svg class="a" style="left:2119.5px;top:344.5px;" width="18" height="18" viewBox="0 0 18 18"><path d="M1.5 1.5 L16.5 16.5 M16.5 1.5 L1.5 16.5" stroke="#333" stroke-width="1.6"/></svg>
<div class="a" style="left:1652px;top:388px;width:491.2px;height:836.8px;background:#fff;"></div>
<span class="t" style="left:1652.00px;top:401px;font-size:17px;line-height:17px;color:#333;transform:scaleX(1.0600);transform-origin:0 50%;-webkit-text-stroke:0.75px #333;">Queries</span>
<div class="a" style="left:1652px;top:425px;width:62px;height:5px;background:#217346;"></div>
<div class="a" style="left:1726px;top:394px;width:2px;height:27px;background:#a2a2a2;"></div>
<span class="t" style="left:1740.90px;top:401px;font-size:17.5px;line-height:17.5px;color:#444;transform:scaleX(1.0238);transform-origin:0 50%;">Connections</span>
<span class="t" style="left:1652.00px;top:446px;font-size:15.8px;line-height:15.8px;color:#444;transform:scaleX(1.0323);transform-origin:0 50%;">2 queries</span>
<div class="a" style="left:1652px;top:467px;width:491px;height:2px;background:#adadad;"></div>
<svg class="a" style="left:1658.6px;top:491px;" width="23" height="20" viewBox="0 0 23 20"><rect x="0.7" y="0.7" width="21" height="18" fill="#fff" stroke="#5a5a5a" stroke-width="1.2"/>
<rect x="0.2" y="0.2" width="22" height="3.6" fill="#3b78c6"/>
<path d="M0.7 9 H21.7 M0.7 14 H21.7 M7.8 4 V18.7 M14.8 4 V18.7" stroke="#b2b2b2" stroke-width="1"/><rect x="0.7" y="0.7" width="21" height="18" fill="none" stroke="#5a5a5a" stroke-width="1.2"/><rect x="0.2" y="0.2" width="22" height="3.6" fill="#3f78c0"/></svg>
<span class="t" style="left:1688.00px;top:492px;font-size:22px;line-height:22px;color:#555;transform:scaleX(0.9811);transform-origin:0 50%;-webkit-text-stroke:0.45px #fff;">dev</span>
<span class="t" style="left:1688.00px;top:527px;font-size:18.2px;line-height:18.2px;color:#444;transform:scaleX(1.0627);transform-origin:0 50%;">0 rows loaded.</span>
<div class="a" style="left:1652px;top:556.3px;width:491.2px;height:74.7px;background:#9fd5b7;"></div>
<svg class="a" style="left:1658.6px;top:566px;" width="23" height="20" viewBox="0 0 23 20"><rect x="0.7" y="0.7" width="21" height="18" fill="#fff" stroke="#5a5a5a" stroke-width="1.2"/>
<rect x="0.2" y="0.2" width="22" height="3.6" fill="#3b78c6"/>
<path d="M0.7 9 H21.7 M0.7 14 H21.7 M7.8 4 V18.7 M14.8 4 V18.7" stroke="#b2b2b2" stroke-width="1"/><rect x="0.7" y="0.7" width="21" height="18" fill="none" stroke="#5a5a5a" stroke-width="1.2"/><rect x="0.2" y="0.2" width="22" height="3.6" fill="#3f78c0"/></svg>
<span class="t" style="left:1688.00px;top:566px;font-size:22px;line-height:22px;color:#43564c;transform:scaleX(0.9259);transform-origin:0 50%;-webkit-text-stroke:0.45px #9fd5b7;">Query1</span>
<svg class="a" style="left:1691.5px;top:597.5px;" width="25" height="22" viewBox="0 0 25 22"><path d="M12.2 2.6 L21.8 19.3 H2.6 Z" fill="#ecb978" stroke="#ecb978" stroke-width="2.8" stroke-linejoin="round"/><rect x="11.2" y="7" width="2.1" height="7.6" fill="#3a3a3a"/><rect x="11.2" y="16.2" width="2.1" height="2.2" fill="#3a3a3a"/></svg>
<span class="t" style="left:1719.40px;top:601px;font-size:18.2px;line-height:18.2px;color:#3c4a43;transform:scaleX(1.0694);transform-origin:0 50%;">Load to worksheet failed.</span>
<svg class="a" style="left:2116px;top:564px;" width="24" height="25" viewBox="0 0 24 25"><path d="M1.2 1.2 H12.2 L17 6 V22 H1.2 Z" fill="#fff" stroke="#5f5a5e" stroke-width="1.3"/><path d="M12.2 1.2 V6 H17" fill="none" stroke="#5f5a5e" stroke-width="1.3"/>
<circle cx="14.8" cy="16.5" r="7.6" fill="#9fd5b7"/>
<path d="M9 15.6 A5.8 5.8 0 0 1 19.6 13.4 M20.6 17.4 A5.8 5.8 0 0 1 10 19.6" fill="none" stroke="#72ab96" stroke-width="2"/><path d="M20.6 9.4 V14.4 H15.6 Z M9 23.6 V18.6 H14 Z" fill="#72ab96"/></svg>
<div class="a" style="left:0;top:322px;width:1605px;height:873px;overflow:hidden;background:#fff">
<div class="a" style="left:0px;top:0px;width:1605px;height:28px;background:#f0f0f0;"></div>
<div class="a" style="left:0px;top:0px;width:39px;height:873px;background:#f0f0f0;"></div>
<svg class="a" style="left:15px;top:3.5px;" width="22" height="22" viewBox="0 0 22 22"><path d="M21 1 V21 H1 Z" fill="#dadada"/></svg>
<div class="a" style="left:39.5px;top:0px;width:104px;height:28px;background:#e1e1e1;"></div>
<div class="a" style="left:0px;top:29px;width:39px;height:29px;background:#e1e1e1;"></div>
<div class="a" style="left:39px;top:0px;width:1px;height:28px;background:#dfdfdf;"></div>
<div class="a" style="left:143px;top:2px;width:1px;height:26px;background:#dfdfdf;"></div>
<div class="a" style="left:272px;top:2px;width:1px;height:26px;background:#dfdfdf;"></div>
<div class="a" style="left:478px;top:2px;width:1px;height:26px;background:#dfdfdf;"></div>
<div class="a" style="left:564px;top:2px;width:1px;height:26px;background:#dfdfdf;"></div>
<div class="a" style="left:638px;top:2px;width:1px;height:26px;background:#dfdfdf;"></div>
<div class="a" style="left:797px;top:2px;width:1px;height:26px;background:#dfdfdf;"></div>
<div class="a" style="left:919px;top:2px;width:1px;height:26px;background:#dfdfdf;"></div>
<div class="a" style="left:1048px;top:2px;width:1px;height:26px;background:#dfdfdf;"></div>
<div class="a" style="left:1158px;top:2px;width:1px;height:26px;background:#dfdfdf;"></div>
<div class="a" style="left:1294px;top:2px;width:1px;height:26px;background:#dfdfdf;"></div>
<div class="a" style="left:1427px;top:2px;width:1px;height:26px;background:#dfdfdf;"></div>
<div class="a" style="left:1523px;top:2px;width:1px;height:26px;background:#dfdfdf;"></div>
<div class="a" style="left:0px;top:28px;width:1605px;height:1px;background:#a6a6a6;"></div>
<div class="a" style="left:39px;top:0px;width:1px;height:873px;background:#b5b5b5;"></div>
<span class="t" style="left:85.16px;top:7px;font-size:19px;line-height:19px;color:#107c41;transform:scaleX(0.9500);transform-origin:50% 50%;">A</span>
<span class="t" style="left:201.41px;top:7px;font-size:19px;line-height:19px;color:#444;transform:scaleX(0.9500);transform-origin:50% 50%;">B</span>
<span class="t" style="left:368.14px;top:7px;font-size:19px;line-height:19px;color:#444;transform:scaleX(0.9500);transform-origin:50% 50%;">C</span>
<span class="t" style="left:514.39px;top:7px;font-size:19px;line-height:19px;color:#444;transform:scaleX(0.9500);transform-origin:50% 50%;">D</span>
<span class="t" style="left:595.16px;top:7px;font-size:19px;line-height:19px;color:#444;transform:scaleX(0.9500);transform-origin:50% 50%;">E</span>
<span class="t" style="left:712.20px;top:7px;font-size:19px;line-height:19px;color:#444;transform:scaleX(0.9500);transform-origin:50% 50%;">F</span>
<span class="t" style="left:851.11px;top:7px;font-size:19px;line-height:19px;color:#444;transform:scaleX(0.9500);transform-origin:50% 50%;">G</span>
<span class="t" style="left:977.14px;top:7px;font-size:19px;line-height:19px;color:#444;transform:scaleX(0.9500);transform-origin:50% 50%;">H</span>
<span class="t" style="left:1101.11px;top:7px;font-size:19px;line-height:19px;color:#444;transform:scaleX(0.9500);transform-origin:50% 50%;">I</span>
<span class="t" style="left:1222.00px;top:7px;font-size:19px;line-height:19px;color:#444;transform:scaleX(0.9500);transform-origin:50% 50%;">J</span>
<span class="t" style="left:1354.66px;top:7px;font-size:19px;line-height:19px;color:#444;transform:scaleX(0.9500);transform-origin:50% 50%;">K</span>
<span class="t" style="left:1470.22px;top:7px;font-size:19px;line-height:19px;color:#444;transform:scaleX(0.9500);transform-origin:50% 50%;">L</span>
<span class="t" style="left:1589.00px;top:7px;font-size:19px;line-height:19px;color:#444;transform:scaleX(1.0425);transform-origin:0 50%;">M</span>
<div class="a" style="left:39.5px;top:29px;width:1565.5px;height:28px;background:#70ad47;"></div>
<div class="a" style="left:39.5px;top:57px;width:1565.5px;height:1px;background:#8cc063;"></div>
<div class="a" style="left:0px;top:57px;width:39px;height:1px;background:linear-gradient(90deg,#ececec,#d2d2d2);"></div>
<span class="t" style="left:14.89px;top:36px;font-size:18px;line-height:18px;color:#107c41;transform:scaleX(1.0500);transform-origin:50% 50%;">1</span>
<div class="a" style="left:39.5px;top:58px;width:1565.5px;height:28px;background:#e2efda;"></div>
<div class="a" style="left:39.5px;top:86px;width:1565.5px;height:1px;background:#a9d08e;"></div>
<div class="a" style="left:0px;top:86px;width:39px;height:1px;background:linear-gradient(90deg,#ececec,#d2d2d2);"></div>
<span class="t" style="left:14.89px;top:65px;font-size:18px;line-height:18px;color:#444;transform:scaleX(1.0500);transform-origin:50% 50%;">2</span>
<div class="a" style="left:143px;top:87px;width:1px;height:28px;background:#d6d6d6;"></div>
<div class="a" style="left:272px;top:87px;width:1px;height:28px;background:#d6d6d6;"></div>
<div class="a" style="left:478px;top:87px;width:1px;height:28px;background:#d6d6d6;"></div>
<div class="a" style="left:564px;top:87px;width:1px;height:28px;background:#d6d6d6;"></div>
<div class="a" style="left:638px;top:87px;width:1px;height:28px;background:#d6d6d6;"></div>
<div class="a" style="left:797px;top:87px;width:1px;height:28px;background:#d6d6d6;"></div>
<div class="a" style="left:919px;top:87px;width:1px;height:28px;background:#d6d6d6;"></div>
<div class="a" style="left:1048px;top:87px;width:1px;height:28px;background:#d6d6d6;"></div>
<div class="a" style="left:1158px;top:87px;width:1px;height:28px;background:#d6d6d6;"></div>
<div class="a" style="left:1294px;top:87px;width:1px;height:28px;background:#d6d6d6;"></div>
<div class="a" style="left:1427px;top:87px;width:1px;height:28px;background:#d6d6d6;"></div>
<div class="a" style="left:1523px;top:87px;width:1px;height:28px;background:#d6d6d6;"></div>
<div class="a" style="left:39.5px;top:115px;width:1565.5px;height:1px;background:#a9d08e;"></div>
<div class="a" style="left:0px;top:115px;width:39px;height:1px;background:linear-gradient(90deg,#ececec,#d2d2d2);"></div>
<span class="t" style="left:14.89px;top:94px;font-size:18px;line-height:18px;color:#444;transform:scaleX(1.0500);transform-origin:50% 50%;">3</span>
<div class="a" style="left:39.5px;top:116px;width:1565.5px;height:28px;background:#e2efda;"></div>
<div class="a" style="left:39.5px;top:144px;width:1565.5px;height:1px;background:#a9d08e;"></div>
<div class="a" style="left:0px;top:144px;width:39px;height:1px;background:linear-gradient(90deg,#ececec,#d2d2d2);"></div>
<span class="t" style="left:14.89px;top:123px;font-size:18px;line-height:18px;color:#444;transform:scaleX(1.0500);transform-origin:50% 50%;">4</span>
<div class="a" style="left:143px;top:145px;width:1px;height:28px;background:#d6d6d6;"></div>
<div class="a" style="left:272px;top:145px;width:1px;height:28px;background:#d6d6d6;"></div>
<div class="a" style="left:478px;top:145px;width:1px;height:28px;background:#d6d6d6;"></div>
<div class="a" style="left:564px;top:145px;width:1px;height:28px;background:#d6d6d6;"></div>
<div class="a" style="left:638px;top:145px;width:1px;height:28px;background:#d6d6d6;"></div>
<div class="a" style="left:797px;top:145px;width:1px;height:28px;background:#d6d6d6;"></div>
<div class="a" style="left:919px;top:145px;width:1px;height:28px;background:#d6d6d6;"></div>
<div class="a" style="left:1048px;top:145px;width:1px;height:28px;background:#d6d6d6;"></div>
<div class="a" style="left:1158px;top:145px;width:1px;height:28px;background:#d6d6d6;"></div>
<div class="a" style="left:1294px;top:145px;width:1px;height:28px;background:#d6d6d6;"></div>
<div class="a" style="left:1427px;top:145px;width:1px;height:28px;background:#d6d6d6;"></div>
<div class="a" style="left:1523px;top:145px;width:1px;height:28px;background:#d6d6d6;"></div>
<div class="a" style="left:39.5px;top:173px;width:1565.5px;height:1px;background:#a9d08e;"></div>
<div class="a" style="left:0px;top:173px;width:39px;height:1px;background:linear-gradient(90deg,#ececec,#d2d2d2);"></div>
<span class="t" style="left:14.89px;top:152px;font-size:18px;line-height:18px;color:#444;transform:scaleX(1.0500);transform-origin:50% 50%;">5</span>
<div class="a" style="left:39.5px;top:174px;width:1565.5px;height:28px;background:#e2efda;"></div>
<div class="a" style="left:39.5px;top:202px;width:1565.5px;height:1px;background:#a9d08e;"></div>
<div class="a" style="left:0px;top:202px;width:39px;height:1px;background:linear-gradient(90deg,#ececec,#d2d2d2);"></div>
<span class="t" style="left:14.89px;top:181px;font-size:18px;line-height:18px;color:#444;transform:scaleX(1.0500);transform-origin:50% 50%;">6</span>
<div class="a" style="left:143px;top:203px;width:1px;height:28px;background:#d6d6d6;"></div>
<div class="a" style="left:272px;top:203px;width:1px;height:28px;background:#d6d6d6;"></div>
<div class="a" style="left:478px;top:203px;width:1px;height:28px;background:#d6d6d6;"></div>
<div class="a" style="left:564px;top:203px;width:1px;height:28px;background:#d6d6d6;"></div>
<div class="a" style="left:638px;top:203px;width:1px;height:28px;background:#d6d6d6;"></div>
<div class="a" style="left:797px;top:203px;width:1px;height:28px;background:#d6d6d6;"></div>
<div class="a" style="left:919px;top:203px;width:1px;height:28px;background:#d6d6d6;"></div>
<div class="a" style="left:1048px;top:203px;width:1px;height:28px;background:#d6d6d6;"></div>
<div class="a" style="left:1158px;top:203px;width:1px;height:28px;background:#d6d6d6;"></div>
<div class="a" style="left:1294px;top:203px;width:1px;height:28px;background:#d6d6d6;"></div>
<div class="a" style="left:1427px;top:203px;width:1px;height:28px;background:#d6d6d6;"></div>
<div class="a" style="left:1523px;top:203px;width:1px;height:28px;background:#d6d6d6;"></div>
<div class="a" style="left:39.5px;top:231px;width:1565.5px;height:1px;background:#a9d08e;"></div>
<div class="a" style="left:0px;top:231px;width:39px;height:1px;background:linear-gradient(90deg,#ececec,#d2d2d2);"></div>
<span class="t" style="left:14.89px;top:210px;font-size:18px;line-height:18px;color:#444;transform:scaleX(1.0500);transform-origin:50% 50%;">7</span>
<div class="a" style="left:39.5px;top:232px;width:1565.5px;height:28px;background:#e2efda;"></div>
<div class="a" style="left:39.5px;top:260px;width:1565.5px;height:1px;background:#a9d08e;"></div>
<div class="a" style="left:0px;top:260px;width:39px;height:1px;background:linear-gradient(90deg,#ececec,#d2d2d2);"></div>
<span class="t" style="left:14.89px;top:239px;font-size:18px;line-height:18px;color:#444;transform:scaleX(1.0500);transform-origin:50% 50%;">8</span>
<div class="a" style="left:143px;top:261px;width:1px;height:28px;background:#d6d6d6;"></div>
<div class="a" style="left:272px;top:261px;width:1px;height:28px;background:#d6d6d6;"></div>
<div class="a" style="left:478px;top:261px;width:1px;height:28px;background:#d6d6d6;"></div>
<div class="a" style="left:564px;top:261px;width:1px;height:28px;background:#d6d6d6;"></div>
<div class="a" style="left:638px;top:261px;width:1px;height:28px;background:#d6d6d6;"></div>
<div class="a" style="left:797px;top:261px;width:1px;height:28px;background:#d6d6d6;"></div>
<div class="a" style="left:919px;top:261px;width:1px;height:28px;background:#d6d6d6;"></div>
<div class="a" style="left:1048px;top:261px;width:1px;height:28px;background:#d6d6d6;"></div>
<div class="a" style="left:1158px;top:261px;width:1px;height:28px;background:#d6d6d6;"></div>
<div class="a" style="left:1294px;top:261px;width:1px;height:28px;background:#d6d6d6;"></div>
<div class="a" style="left:1427px;top:261px;width:1px;height:28px;background:#d6d6d6;"></div>
<div class="a" style="left:1523px;top:261px;width:1px;height:28px;background:#d6d6d6;"></div>
<div class="a" style="left:39.5px;top:289px;width:1565.5px;height:1px;background:#a9d08e;"></div>
<div class="a" style="left:0px;top:289px;width:39px;height:1px;background:linear-gradient(90deg,#ececec,#d2d2d2);"></div>
<span class="t" style="left:14.89px;top:268px;font-size:18px;line-height:18px;color:#444;transform:scaleX(1.0500);transform-origin:50% 50%;">9</span>
<div class="a" style="left:39.5px;top:290px;width:1565.5px;height:28px;background:#e2efda;"></div>
<div class="a" style="left:39.5px;top:318px;width:1565.5px;height:1px;background:#a9d08e;"></div>
<div class="a" style="left:0px;top:318px;width:39px;height:1px;background:linear-gradient(90deg,#ececec,#d2d2d2);"></div>
<span class="t" style="left:9.89px;top:297px;font-size:18px;line-height:18px;color:#444;transform:scaleX(1.0500);transform-origin:50% 50%;">10</span>
<div class="a" style="left:143px;top:319px;width:1px;height:28px;background:#d6d6d6;"></div>
<div class="a" style="left:272px;top:319px;width:1px;height:28px;background:#d6d6d6;"></div>
<div class="a" style="left:478px;top:319px;width:1px;height:28px;background:#d6d6d6;"></div>
<div class="a" style="left:564px;top:319px;width:1px;height:28px;background:#d6d6d6;"></div>
<div class="a" style="left:638px;top:319px;width:1px;height:28px;background:#d6d6d6;"></div>
<div class="a" style="left:797px;top:319px;width:1px;height:28px;background:#d6d6d6;"></div>
<div class="a" style="left:919px;top:319px;width:1px;height:28px;background:#d6d6d6;"></div>
<div class="a" style="left:1048px;top:319px;width:1px;height:28px;background:#d6d6d6;"></div>
<div class="a" style="left:1158px;top:319px;width:1px;height:28px;background:#d6d6d6;"></div>
<div class="a" style="left:1294px;top:319px;width:1px;height:28px;background:#d6d6d6;"></div>
<div class="a" style="left:1427px;top:319px;width:1px;height:28px;background:#d6d6d6;"></div>
<div class="a" style="left:1523px;top:319px;width:1px;height:28px;background:#d6d6d6;"></div>
<div class="a" style="left:39.5px;top:347px;width:1565.5px;height:1px;background:#a9d08e;"></div>
<div class="a" style="left:0px;top:347px;width:39px;height:1px;background:linear-gradient(90deg,#ececec,#d2d2d2);"></div>
<span class="t" style="left:10.56px;top:326px;font-size:18px;line-height:18px;color:#444;transform:scaleX(1.0500);transform-origin:50% 50%;">11</span>
<div class="a" style="left:39.5px;top:348px;width:1565.5px;height:28px;background:#e2efda;"></div>
<div class="a" style="left:39.5px;top:376px;width:1565.5px;height:1px;background:#a9d08e;"></div>
<div class="a" style="left:0px;top:376px;width:39px;height:1px;background:linear-gradient(90deg,#ececec,#d2d2d2);"></div>
<span class="t" style="left:9.89px;top:355px;font-size:18px;line-height:18px;color:#444;transform:scaleX(1.0500);transform-origin:50% 50%;">12</span>
<div class="a" style="left:143px;top:377px;width:1px;height:28px;background:#d6d6d6;"></div>
<div class="a" style="left:272px;top:377px;width:1px;height:28px;background:#d6d6d6;"></div>
<div class="a" style="left:478px;top:377px;width:1px;height:28px;background:#d6d6d6;"></div>
<div class="a" style="left:564px;top:377px;width:1px;height:28px;background:#d6d6d6;"></div>
<div class="a" style="left:638px;top:377px;width:1px;height:28px;background:#d6d6d6;"></div>
<div class="a" style="left:797px;top:377px;width:1px;height:28px;background:#d6d6d6;"></div>
<div class="a" style="left:919px;top:377px;width:1px;height:28px;background:#d6d6d6;"></div>
<div class="a" style="left:1048px;top:377px;width:1px;height:28px;background:#d6d6d6;"></div>
<div class="a" style="left:1158px;top:377px;width:1px;height:28px;background:#d6d6d6;"></div>
<div class="a" style="left:1294px;top:377px;width:1px;height:28px;background:#d6d6d6;"></div>
<div class="a" style="left:1427px;top:377px;width:1px;height:28px;background:#d6d6d6;"></div>
<div class="a" style="left:1523px;top:377px;width:1px;height:28px;background:#d6d6d6;"></div>
<div class="a" style="left:39.5px;top:405px;width:1565.5px;height:1px;background:#a9d08e;"></div>
<div class="a" style="left:0px;top:405px;width:39px;height:1px;background:linear-gradient(90deg,#ececec,#d2d2d2);"></div>
<span class="t" style="left:9.89px;top:384px;font-size:18px;line-height:18px;color:#444;transform:scaleX(1.0500);transform-origin:50% 50%;">13</span>
<div class="a" style="left:39.5px;top:406px;width:1565.5px;height:28px;background:#e2efda;"></div>
<div class="a" style="left:39.5px;top:434px;width:1565.5px;height:1px;background:#a9d08e;"></div>
<div class="a" style="left:0px;top:434px;width:39px;height:1px;background:linear-gradient(90deg,#ececec,#d2d2d2);"></div>
<span class="t" style="left:9.89px;top:413px;font-size:18px;line-height:18px;color:#444;transform:scaleX(1.0500);transform-origin:50% 50%;">14</span>
<div class="a" style="left:143px;top:435px;width:1px;height:28px;background:#d6d6d6;"></div>
<div class="a" style="left:272px;top:435px;width:1px;height:28px;background:#d6d6d6;"></div>
<div class="a" style="left:478px;top:435px;width:1px;height:28px;background:#d6d6d6;"></div>
<div class="a" style="left:564px;top:435px;width:1px;height:28px;background:#d6d6d6;"></div>
<div class="a" style="left:638px;top:435px;width:1px;height:28px;background:#d6d6d6;"></div>
<div class="a" style="left:797px;top:435px;width:1px;height:28px;background:#d6d6d6;"></div>
<div class="a" style="left:919px;top:435px;width:1px;height:28px;background:#d6d6d6;"></div>
<div class="a" style="left:1048px;top:435px;width:1px;height:28px;background:#d6d6d6;"></div>
<div class="a" style="left:1158px;top:435px;width:1px;height:28px;background:#d6d6d6;"></div>
<div class="a" style="left:1294px;top:435px;width:1px;height:28px;background:#d6d6d6;"></div>
<div class="a" style="left:1427px;top:435px;width:1px;height:28px;background:#d6d6d6;"></div>
<div class="a" style="left:1523px;top:435px;width:1px;height:28px;background:#d6d6d6;"></div>
<div class="a" style="left:39.5px;top:463px;width:1565.5px;height:1px;background:#a9d08e;"></div>
<div class="a" style="left:0px;top:463px;width:39px;height:1px;background:linear-gradient(90deg,#ececec,#d2d2d2);"></div>
<span class="t" style="left:9.89px;top:442px;font-size:18px;line-height:18px;color:#444;transform:scaleX(1.0500);transform-origin:50% 50%;">15</span>
<div class="a" style="left:39.5px;top:464px;width:1565.5px;height:28px;background:#e2efda;"></div>
<div class="a" style="left:39.5px;top:492px;width:1565.5px;height:1px;background:#a9d08e;"></div>
<div class="a" style="left:0px;top:492px;width:39px;height:1px;background:linear-gradient(90deg,#ececec,#d2d2d2);"></div>
<span class="t" style="left:9.89px;top:471px;font-size:18px;line-height:18px;color:#444;transform:scaleX(1.0500);transform-origin:50% 50%;">16</span>
<div class="a" style="left:143px;top:493px;width:1px;height:28px;background:#d6d6d6;"></div>
<div class="a" style="left:272px;top:493px;width:1px;height:28px;background:#d6d6d6;"></div>
<div class="a" style="left:478px;top:493px;width:1px;height:28px;background:#d6d6d6;"></div>
<div class="a" style="left:564px;top:493px;width:1px;height:28px;background:#d6d6d6;"></div>
<div class="a" style="left:638px;top:493px;width:1px;height:28px;background:#d6d6d6;"></div>
<div class="a" style="left:797px;top:493px;width:1px;height:28px;background:#d6d6d6;"></div>
<div class="a" style="left:919px;top:493px;width:1px;height:28px;background:#d6d6d6;"></div>
<div class="a" style="left:1048px;top:493px;width:1px;height:28px;background:#d6d6d6;"></div>
<div class="a" style="left:1158px;top:493px;width:1px;height:28px;background:#d6d6d6;"></div>
<div class="a" style="left:1294px;top:493px;width:1px;height:28px;background:#d6d6d6;"></div>
<div class="a" style="left:1427px;top:493px;width:1px;height:28px;background:#d6d6d6;"></div>
<div class="a" style="left:1523px;top:493px;width:1px;height:28px;background:#d6d6d6;"></div>
<div class="a" style="left:39.5px;top:521px;width:1565.5px;height:1px;background:#a9d08e;"></div>
<div class="a" style="left:0px;top:521px;width:39px;height:1px;background:linear-gradient(90deg,#ececec,#d2d2d2);"></div>
<span class="t" style="left:9.89px;top:500px;font-size:18px;line-height:18px;color:#444;transform:scaleX(1.0500);transform-origin:50% 50%;">17</span>
<div class="a" style="left:39.5px;top:522px;width:1565.5px;height:28px;background:#e2efda;"></div>
<div class="a" style="left:39.5px;top:550px;width:1565.5px;height:1px;background:#a9d08e;"></div>
<div class="a" style="left:0px;top:550px;width:39px;height:1px;background:linear-gradient(90deg,#ececec,#d2d2d2);"></div>
<span class="t" style="left:9.89px;top:529px;font-size:18px;line-height:18px;color:#444;transform:scaleX(1.0500);transform-origin:50% 50%;">18</span>
<div class="a" style="left:143px;top:551px;width:1px;height:28px;background:#d6d6d6;"></div>
<div class="a" style="left:272px;top:551px;width:1px;height:28px;background:#d6d6d6;"></div>
<div class="a" style="left:478px;top:551px;width:1px;height:28px;background:#d6d6d6;"></div>
<div class="a" style="left:564px;top:551px;width:1px;height:28px;background:#d6d6d6;"></div>
<div class="a" style="left:638px;top:551px;width:1px;height:28px;background:#d6d6d6;"></div>
<div class="a" style="left:797px;top:551px;width:1px;height:28px;background:#d6d6d6;"></div>
<div class="a" style="left:919px;top:551px;width:1px;height:28px;background:#d6d6d6;"></div>
<div class="a" style="left:1048px;top:551px;width:1px;height:28px;background:#d6d6d6;"></div>
<div class="a" style="left:1158px;top:551px;width:1px;height:28px;background:#d6d6d6;"></div>
<div class="a" style="left:1294px;top:551px;width:1px;height:28px;background:#d6d6d6;"></div>
<div class="a" style="left:1427px;top:551px;width:1px;height:28px;background:#d6d6d6;"></div>
<div class="a" style="left:1523px;top:551px;width:1px;height:28px;background:#d6d6d6;"></div>
<div class="a" style="left:39.5px;top:579px;width:1565.5px;height:1px;background:#a9d08e;"></div>
<div class="a" style="left:0px;top:579px;width:39px;height:1px;background:linear-gradient(90deg,#ececec,#d2d2d2);"></div>
<span class="t" style="left:9.89px;top:558px;font-size:18px;line-height:18px;color:#444;transform:scaleX(1.0500);transform-origin:50% 50%;">19</span>
<div class="a" style="left:39.5px;top:580px;width:1565.5px;height:28px;background:#e2efda;"></div>
<div class="a" style="left:39.5px;top:608px;width:1565.5px;height:1px;background:#a9d08e;"></div>
<div class="a" style="left:0px;top:608px;width:39px;height:1px;background:linear-gradient(90deg,#ececec,#d2d2d2);"></div>
<span class="t" style="left:9.89px;top:587px;font-size:18px;line-height:18px;color:#444;transform:scaleX(1.0500);transform-origin:50% 50%;">20</span>
<div class="a" style="left:143px;top:609px;width:1px;height:28px;background:#d6d6d6;"></div>
<div class="a" style="left:272px;top:609px;width:1px;height:28px;background:#d6d6d6;"></div>
<div class="a" style="left:478px;top:609px;width:1px;height:28px;background:#d6d6d6;"></div>
<div class="a" style="left:564px;top:609px;width:1px;height:28px;background:#d6d6d6;"></div>
<div class="a" style="left:638px;top:609px;width:1px;height:28px;background:#d6d6d6;"></div>
<div class="a" style="left:797px;top:609px;width:1px;height:28px;background:#d6d6d6;"></div>
<div class="a" style="left:919px;top:609px;width:1px;height:28px;background:#d6d6d6;"></div>
<div class="a" style="left:1048px;top:609px;width:1px;height:28px;background:#d6d6d6;"></div>
<div class="a" style="left:1158px;top:609px;width:1px;height:28px;background:#d6d6d6;"></div>
<div class="a" style="left:1294px;top:609px;width:1px;height:28px;background:#d6d6d6;"></div>
<div class="a" style="left:1427px;top:609px;width:1px;height:28px;background:#d6d6d6;"></div>
<div class="a" style="left:1523px;top:609px;width:1px;height:28px;background:#d6d6d6;"></div>
<div class="a" style="left:39.5px;top:637px;width:1565.5px;height:1px;background:#a9d08e;"></div>
<div class="a" style="left:0px;top:637px;width:39px;height:1px;background:linear-gradient(90deg,#ececec,#d2d2d2);"></div>
<span class="t" style="left:9.89px;top:616px;font-size:18px;line-height:18px;color:#444;transform:scaleX(1.0500);transform-origin:50% 50%;">21</span>
<div class="a" style="left:39.5px;top:638px;width:1565.5px;height:28px;background:#e2efda;"></div>
<div class="a" style="left:39.5px;top:666px;width:1565.5px;height:1px;background:#a9d08e;"></div>
<div class="a" style="left:0px;top:666px;width:39px;height:1px;background:linear-gradient(90deg,#ececec,#d2d2d2);"></div>
<span class="t" style="left:9.89px;top:645px;font-size:18px;line-height:18px;color:#444;transform:scaleX(1.0500);transform-origin:50% 50%;">22</span>
<div class="a" style="left:143px;top:667px;width:1px;height:28px;background:#d6d6d6;"></div>
<div class="a" style="left:272px;top:667px;width:1px;height:28px;background:#d6d6d6;"></div>
<div class="a" style="left:478px;top:667px;width:1px;height:28px;background:#d6d6d6;"></div>
<div class="a" style="left:564px;top:667px;width:1px;height:28px;background:#d6d6d6;"></div>
<div class="a" style="left:638px;top:667px;width:1px;height:28px;background:#d6d6d6;"></div>
<div class="a" style="left:797px;top:667px;width:1px;height:28px;background:#d6d6d6;"></div>
<div class="a" style="left:919px;top:667px;width:1px;height:28px;background:#d6d6d6;"></div>
<div class="a" style="left:1048px;top:667px;width:1px;height:28px;background:#d6d6d6;"></div>
<div class="a" style="left:1158px;top:667px;width:1px;height:28px;background:#d6d6d6;"></div>
<div class="a" style="left:1294px;top:667px;width:1px;height:28px;background:#d6d6d6;"></div>
<div class="a" style="left:1427px;top:667px;width:1px;height:28px;background:#d6d6d6;"></div>
<div class="a" style="left:1523px;top:667px;width:1px;height:28px;background:#d6d6d6;"></div>
<div class="a" style="left:39.5px;top:695px;width:1565.5px;height:1px;background:#a9d08e;"></div>
<div class="a" style="left:0px;top:695px;width:39px;height:1px;background:linear-gradient(90deg,#ececec,#d2d2d2);"></div>
<span class="t" style="left:9.89px;top:674px;font-size:18px;line-height:18px;color:#444;transform:scaleX(1.0500);transform-origin:50% 50%;">23</span>
<div class="a" style="left:39.5px;top:696px;width:1565.5px;height:28px;background:#e2efda;"></div>
<div class="a" style="left:39.5px;top:724px;width:1565.5px;height:1px;background:#a9d08e;"></div>
<div class="a" style="left:0px;top:724px;width:39px;height:1px;background:linear-gradient(90deg,#ececec,#d2d2d2);"></div>
<span class="t" style="left:9.89px;top:703px;font-size:18px;line-height:18px;color:#444;transform:scaleX(1.0500);transform-origin:50% 50%;">24</span>
<div class="a" style="left:143px;top:725px;width:1px;height:28px;background:#d6d6d6;"></div>
<div class="a" style="left:272px;top:725px;width:1px;height:28px;background:#d6d6d6;"></div>
<div class="a" style="left:478px;top:725px;width:1px;height:28px;background:#d6d6d6;"></div>
<div class="a" style="left:564px;top:725px;width:1px;height:28px;background:#d6d6d6;"></div>
<div class="a" style="left:638px;top:725px;width:1px;height:28px;background:#d6d6d6;"></div>
<div class="a" style="left:797px;top:725px;width:1px;height:28px;background:#d6d6d6;"></div>
<div class="a" style="left:919px;top:725px;width:1px;height:28px;background:#d6d6d6;"></div>
<div class="a" style="left:1048px;top:725px;width:1px;height:28px;background:#d6d6d6;"></div>
<div class="a" style="left:1158px;top:725px;width:1px;height:28px;background:#d6d6d6;"></div>
<div class="a" style="left:1294px;top:725px;width:1px;height:28px;background:#d6d6d6;"></div>
<div class="a" style="left:1427px;top:725px;width:1px;height:28px;background:#d6d6d6;"></div>
<div class="a" style="left:1523px;top:725px;width:1px;height:28px;background:#d6d6d6;"></div>
<div class="a" style="left:39.5px;top:753px;width:1565.5px;height:1px;background:#a9d08e;"></div>
<div class="a" style="left:0px;top:753px;width:39px;height:1px;background:linear-gradient(90deg,#ececec,#d2d2d2);"></div>
<span class="t" style="left:9.89px;top:732px;font-size:18px;line-height:18px;color:#444;transform:scaleX(1.0500);transform-origin:50% 50%;">25</span>
<div class="a" style="left:39.5px;top:754px;width:1565.5px;height:28px;background:#e2efda;"></div>
<div class="a" style="left:39.5px;top:782px;width:1565.5px;height:1px;background:#a9d08e;"></div>
<div class="a" style="left:0px;top:782px;width:39px;height:1px;background:linear-gradient(90deg,#ececec,#d2d2d2);"></div>
<span class="t" style="left:9.89px;top:761px;font-size:18px;line-height:18px;color:#444;transform:scaleX(1.0500);transform-origin:50% 50%;">26</span>
<div class="a" style="left:143px;top:783px;width:1px;height:28px;background:#d6d6d6;"></div>
<div class="a" style="left:272px;top:783px;width:1px;height:28px;background:#d6d6d6;"></div>
<div class="a" style="left:478px;top:783px;width:1px;height:28px;background:#d6d6d6;"></div>
<div class="a" style="left:564px;top:783px;width:1px;height:28px;background:#d6d6d6;"></div>
<div class="a" style="left:638px;top:783px;width:1px;height:28px;background:#d6d6d6;"></div>
<div class="a" style="left:797px;top:783px;width:1px;height:28px;background:#d6d6d6;"></div>
<div class="a" style="left:919px;top:783px;width:1px;height:28px;background:#d6d6d6;"></div>
<div class="a" style="left:1048px;top:783px;width:1px;height:28px;background:#d6d6d6;"></div>
<div class="a" style="left:1158px;top:783px;width:1px;height:28px;background:#d6d6d6;"></div>
<div class="a" style="left:1294px;top:783px;width:1px;height:28px;background:#d6d6d6;"></div>
<div class="a" style="left:1427px;top:783px;width:1px;height:28px;background:#d6d6d6;"></div>
<div class="a" style="left:1523px;top:783px;width:1px;height:28px;background:#d6d6d6;"></div>
<div class="a" style="left:39.5px;top:811px;width:1565.5px;height:1px;background:#a9d08e;"></div>
<div class="a" style="left:0px;top:811px;width:39px;height:1px;background:linear-gradient(90deg,#ececec,#d2d2d2);"></div>
<span class="t" style="left:9.89px;top:790px;font-size:18px;line-height:18px;color:#444;transform:scaleX(1.0500);transform-origin:50% 50%;">27</span>
<div class="a" style="left:39.5px;top:812px;width:1565.5px;height:28px;background:#e2efda;"></div>
<div class="a" style="left:39.5px;top:840px;width:1565.5px;height:1px;background:#a9d08e;"></div>
<div class="a" style="left:0px;top:840px;width:39px;height:1px;background:linear-gradient(90deg,#ececec,#d2d2d2);"></div>
<span class="t" style="left:9.89px;top:819px;font-size:18px;line-height:18px;color:#444;transform:scaleX(1.0500);transform-origin:50% 50%;">28</span>
<div class="a" style="left:143px;top:841px;width:1px;height:28px;background:#d6d6d6;"></div>
<div class="a" style="left:272px;top:841px;width:1px;height:28px;background:#d6d6d6;"></div>
<div class="a" style="left:478px;top:841px;width:1px;height:28px;background:#d6d6d6;"></div>
<div class="a" style="left:564px;top:841px;width:1px;height:28px;background:#d6d6d6;"></div>
<div class="a" style="left:638px;top:841px;width:1px;height:28px;background:#d6d6d6;"></div>
<div class="a" style="left:797px;top:841px;width:1px;height:28px;background:#d6d6d6;"></div>
<div class="a" style="left:919px;top:841px;width:1px;height:28px;background:#d6d6d6;"></div>
<div class="a" style="left:1048px;top:841px;width:1px;height:28px;background:#d6d6d6;"></div>
<div class="a" style="left:1158px;top:841px;width:1px;height:28px;background:#d6d6d6;"></div>
<div class="a" style="left:1294px;top:841px;width:1px;height:28px;background:#d6d6d6;"></div>
<div class="a" style="left:1427px;top:841px;width:1px;height:28px;background:#d6d6d6;"></div>
<div class="a" style="left:1523px;top:841px;width:1px;height:28px;background:#d6d6d6;"></div>
<div class="a" style="left:39.5px;top:869px;width:1565.5px;height:1px;background:#a9d08e;"></div>
<div class="a" style="left:0px;top:869px;width:39px;height:1px;background:linear-gradient(90deg,#ececec,#d2d2d2);"></div>
<span class="t" style="left:9.89px;top:848px;font-size:18px;line-height:18px;color:#444;transform:scaleX(1.0500);transform-origin:50% 50%;">29</span>
<div class="a" style="left:39.5px;top:870px;width:1565.5px;height:28px;background:#e2efda;"></div>
<div class="a" style="left:39.5px;top:898px;width:1565.5px;height:1px;background:#a9d08e;"></div>
<div class="a" style="left:0px;top:898px;width:39px;height:1px;background:linear-gradient(90deg,#ececec,#d2d2d2);"></div>
<span class="t" style="left:42.80px;top:35px;font-size:19.5px;line-height:19.5px;color:#fff;font-weight:700;transform:scaleX(1.0421);transform-origin:0 50%;">fl_date</span>
<div class="a" style="left:119px;top:32px;width:24px;height:24px;background:linear-gradient(#ffffff,#eff0f5);border:1px solid #a9acb4;border-top-color:#cfd1d6;border-right-color:#cfd1d6;box-sizing:border-box;"></div>
<svg class="a" style="left:126.5px;top:41.3px;" width="10" height="6" viewBox="0 0 10 6"><path d="M0.2 0.3 H9.8 L5 5.6 Z" fill="#5a5a5a"/></svg>
<span class="t" style="left:146.70px;top:35px;font-size:19.5px;line-height:19.5px;color:#fff;font-weight:700;">op_carrier</span>
<div class="a" style="left:247px;top:32px;width:24px;height:24px;background:linear-gradient(#ffffff,#eff0f5);border:1px solid #a9acb4;border-top-color:#cfd1d6;border-right-color:#cfd1d6;box-sizing:border-box;"></div>
<svg class="a" style="left:254.5px;top:41.3px;" width="10" height="6" viewBox="0 0 10 6"><path d="M0.2 0.3 H9.8 L5 5.6 Z" fill="#5a5a5a"/></svg>
<span class="t" style="left:276.00px;top:35px;font-size:19.5px;line-height:19.5px;color:#fff;font-weight:700;transform:scaleX(1.0073);transform-origin:0 50%;">op_carrier_fl_num</span>
<div class="a" style="left:453px;top:32px;width:24px;height:24px;background:linear-gradient(#ffffff,#eff0f5);border:1px solid #a9acb4;border-top-color:#cfd1d6;border-right-color:#cfd1d6;box-sizing:border-box;"></div>
<svg class="a" style="left:460.5px;top:41.3px;" width="10" height="6" viewBox="0 0 10 6"><path d="M0.2 0.3 H9.8 L5 5.6 Z" fill="#5a5a5a"/></svg>
<span class="t" style="left:482.00px;top:35px;font-size:19.5px;line-height:19.5px;color:#fff;font-weight:700;transform:scaleX(0.9638);transform-origin:0 50%;">origin</span>
<div class="a" style="left:540px;top:32px;width:24px;height:24px;background:linear-gradient(#ffffff,#eff0f5);border:1px solid #a9acb4;border-top-color:#cfd1d6;border-right-color:#cfd1d6;box-sizing:border-box;"></div>
<svg class="a" style="left:547.5px;top:41.3px;" width="10" height="6" viewBox="0 0 10 6"><path d="M0.2 0.3 H9.8 L5 5.6 Z" fill="#5a5a5a"/></svg>
<span class="t" style="left:568.20px;top:35px;font-size:19.5px;line-height:19.5px;color:#fff;font-weight:700;transform:scaleX(0.9851);transform-origin:0 50%;">dest</span>
<div class="a" style="left:614px;top:32px;width:24px;height:24px;background:linear-gradient(#ffffff,#eff0f5);border:1px solid #a9acb4;border-top-color:#cfd1d6;border-right-color:#cfd1d6;box-sizing:border-box;"></div>
<svg class="a" style="left:621.5px;top:41.3px;" width="10" height="6" viewBox="0 0 10 6"><path d="M0.2 0.3 H9.8 L5 5.6 Z" fill="#5a5a5a"/></svg>
<span class="t" style="left:641.80px;top:35px;font-size:19.5px;line-height:19.5px;color:#fff;font-weight:700;">crs_dep_time</span>
<div class="a" style="left:773px;top:32px;width:24px;height:24px;background:linear-gradient(#ffffff,#eff0f5);border:1px solid #a9acb4;border-top-color:#cfd1d6;border-right-color:#cfd1d6;box-sizing:border-box;"></div>
<svg class="a" style="left:780.5px;top:41.3px;" width="10" height="6" viewBox="0 0 10 6"><path d="M0.2 0.3 H9.8 L5 5.6 Z" fill="#5a5a5a"/></svg>
<span class="t" style="left:801.40px;top:35px;font-size:19.5px;line-height:19.5px;color:#fff;font-weight:700;transform:scaleX(1.0233);transform-origin:0 50%;">dep_time</span>
<div class="a" style="left:895px;top:32px;width:24px;height:24px;background:linear-gradient(#ffffff,#eff0f5);border:1px solid #a9acb4;border-top-color:#cfd1d6;border-right-color:#cfd1d6;box-sizing:border-box;"></div>
<svg class="a" style="left:902.5px;top:41.3px;" width="10" height="6" viewBox="0 0 10 6"><path d="M0.2 0.3 H9.8 L5 5.6 Z" fill="#5a5a5a"/></svg>
<span class="t" style="left:922.70px;top:35px;font-size:19.5px;line-height:19.5px;color:#fff;font-weight:700;">dep_delay</span>
<div class="a" style="left:1024px;top:32px;width:24px;height:24px;background:linear-gradient(#ffffff,#eff0f5);border:1px solid #a9acb4;border-top-color:#cfd1d6;border-right-color:#cfd1d6;box-sizing:border-box;"></div>
<svg class="a" style="left:1031.5px;top:41.3px;" width="10" height="6" viewBox="0 0 10 6"><path d="M0.2 0.3 H9.8 L5 5.6 Z" fill="#5a5a5a"/></svg>
<span class="t" style="left:1051.90px;top:35px;font-size:19.5px;line-height:19.5px;color:#fff;font-weight:700;transform:scaleX(1.0245);transform-origin:0 50%;">taxi_out</span>
<div class="a" style="left:1134px;top:32px;width:24px;height:24px;background:linear-gradient(#ffffff,#eff0f5);border:1px solid #a9acb4;border-top-color:#cfd1d6;border-right-color:#cfd1d6;box-sizing:border-box;"></div>
<svg class="a" style="left:1141.5px;top:41.3px;" width="10" height="6" viewBox="0 0 10 6"><path d="M0.2 0.3 H9.8 L5 5.6 Z" fill="#5a5a5a"/></svg>
<span class="t" style="left:1163.20px;top:35px;font-size:19.5px;line-height:19.5px;color:#fff;font-weight:700;">wheels_off</span>
<div class="a" style="left:1270px;top:32px;width:24px;height:24px;background:linear-gradient(#ffffff,#eff0f5);border:1px solid #a9acb4;border-top-color:#cfd1d6;border-right-color:#cfd1d6;box-sizing:border-box;"></div>
<svg class="a" style="left:1277.5px;top:41.3px;" width="10" height="6" viewBox="0 0 10 6"><path d="M0.2 0.3 H9.8 L5 5.6 Z" fill="#5a5a5a"/></svg>
<span class="t" style="left:1298.10px;top:35px;font-size:19.5px;line-height:19.5px;color:#fff;font-weight:700;transform:scaleX(0.9940);transform-origin:0 50%;">wheels_on</span>
<div class="a" style="left:1403px;top:32px;width:24px;height:24px;background:linear-gradient(#ffffff,#eff0f5);border:1px solid #a9acb4;border-top-color:#cfd1d6;border-right-color:#cfd1d6;box-sizing:border-box;"></div>
<svg class="a" style="left:1410.5px;top:41.3px;" width="10" height="6" viewBox="0 0 10 6"><path d="M0.2 0.3 H9.8 L5 5.6 Z" fill="#5a5a5a"/></svg>
<span class="t" style="left:1431.40px;top:35px;font-size:19.5px;line-height:19.5px;color:#fff;font-weight:700;">taxi_in</span>
<div class="a" style="left:1499px;top:32px;width:24px;height:24px;background:linear-gradient(#ffffff,#eff0f5);border:1px solid #a9acb4;border-top-color:#cfd1d6;border-right-color:#cfd1d6;box-sizing:border-box;"></div>
<svg class="a" style="left:1506.5px;top:41.3px;" width="10" height="6" viewBox="0 0 10 6"><path d="M0.2 0.3 H9.8 L5 5.6 Z" fill="#5a5a5a"/></svg>
<span class="t" style="left:1527.00px;top:35px;font-size:19.5px;line-height:19.5px;color:#fff;font-weight:700;transform:scaleX(0.9463);transform-origin:0 50%;">crs_arr_time</span>
<span class="t" style="left:64.29px;top:64px;font-size:19.5px;line-height:19.5px;color:#000;transform:scaleX(1.1053);transform-origin:100% 50%;-webkit-text-stroke:0.22px #000;">1/1/2018</span>
<span class="t" style="left:147.10px;top:64px;font-size:19.5px;line-height:19.5px;color:#000;transform:scaleX(0.9910);transform-origin:0 50%;-webkit-text-stroke:0.22px #000;">UA</span>
<span class="t" style="left:431.52px;top:64px;font-size:19.5px;line-height:19.5px;color:#000;transform:scaleX(1.0281);transform-origin:100% 50%;-webkit-text-stroke:0.22px #000;">2429</span>
<span class="t" style="left:481.60px;top:64px;font-size:19.5px;line-height:19.5px;color:#000;transform:scaleX(0.9289);transform-origin:0 50%;-webkit-text-stroke:0.22px #000;">EWR</span>
<span class="t" style="left:568.10px;top:64px;font-size:19.5px;line-height:19.5px;color:#000;transform:scaleX(0.9346);transform-origin:0 50%;-webkit-text-stroke:0.22px #000;">DEN</span>
<span class="t" style="left:751.02px;top:64px;font-size:19.5px;line-height:19.5px;color:#000;transform:scaleX(1.0281);transform-origin:100% 50%;-webkit-text-stroke:0.22px #000;">1517</span>
<span class="t" style="left:873.02px;top:64px;font-size:19.5px;line-height:19.5px;color:#000;transform:scaleX(1.0281);transform-origin:100% 50%;-webkit-text-stroke:0.22px #000;">1512</span>
<span class="t" style="left:1028.06px;top:64px;font-size:19.5px;line-height:19.5px;color:#000;transform:scaleX(1.0315);transform-origin:100% 50%;-webkit-text-stroke:0.22px #000;">-5</span>
<span class="t" style="left:1134.21px;top:64px;font-size:19.5px;line-height:19.5px;color:#000;transform:scaleX(1.0281);transform-origin:100% 50%;-webkit-text-stroke:0.22px #000;">15</span>
<span class="t" style="left:1248.02px;top:64px;font-size:19.5px;line-height:19.5px;color:#000;transform:scaleX(1.0281);transform-origin:100% 50%;-webkit-text-stroke:0.22px #000;">1527</span>
<span class="t" style="left:1381.02px;top:64px;font-size:19.5px;line-height:19.5px;color:#000;transform:scaleX(1.0281);transform-origin:100% 50%;-webkit-text-stroke:0.22px #000;">1712</span>
<span class="t" style="left:1498.71px;top:64px;font-size:19.5px;line-height:19.5px;color:#000;transform:scaleX(1.0281);transform-origin:100% 50%;-webkit-text-stroke:0.22px #000;">10</span>
<span class="t" style="left:64.29px;top:93px;font-size:19.5px;line-height:19.5px;color:#000;transform:scaleX(1.1053);transform-origin:100% 50%;-webkit-text-stroke:0.22px #000;">1/1/2018</span>
<span class="t" style="left:147.10px;top:93px;font-size:19.5px;line-height:19.5px;color:#000;transform:scaleX(0.9910);transform-origin:0 50%;-webkit-text-stroke:0.22px #000;">UA</span>
<span class="t" style="left:431.52px;top:93px;font-size:19.5px;line-height:19.5px;color:#000;transform:scaleX(1.0281);transform-origin:100% 50%;-webkit-text-stroke:0.22px #000;">2426</span>
<span class="t" style="left:481.60px;top:93px;font-size:19.5px;line-height:19.5px;color:#000;transform:scaleX(0.9237);transform-origin:0 50%;-webkit-text-stroke:0.22px #000;">SNA</span>
<span class="t" style="left:568.10px;top:93px;font-size:19.5px;line-height:19.5px;color:#000;transform:scaleX(0.9346);transform-origin:0 50%;-webkit-text-stroke:0.22px #000;">DEN</span>
<span class="t" style="left:751.02px;top:93px;font-size:19.5px;line-height:19.5px;color:#000;transform:scaleX(1.0281);transform-origin:100% 50%;-webkit-text-stroke:0.22px #000;">1335</span>
<span class="t" style="left:873.02px;top:93px;font-size:19.5px;line-height:19.5px;color:#000;transform:scaleX(1.0281);transform-origin:100% 50%;-webkit-text-stroke:0.22px #000;">1330</span>
<span class="t" style="left:1028.06px;top:93px;font-size:19.5px;line-height:19.5px;color:#000;transform:scaleX(1.0315);transform-origin:100% 50%;-webkit-text-stroke:0.22px #000;">-5</span>
<span class="t" style="left:1134.21px;top:93px;font-size:19.5px;line-height:19.5px;color:#000;transform:scaleX(1.0281);transform-origin:100% 50%;-webkit-text-stroke:0.22px #000;">15</span>
<span class="t" style="left:1248.02px;top:93px;font-size:19.5px;line-height:19.5px;color:#000;transform:scaleX(1.0281);transform-origin:100% 50%;-webkit-text-stroke:0.22px #000;">1345</span>
<span class="t" style="left:1381.02px;top:93px;font-size:19.5px;line-height:19.5px;color:#000;transform:scaleX(1.0281);transform-origin:100% 50%;-webkit-text-stroke:0.22px #000;">1631</span>
<span class="t" style="left:1509.55px;top:93px;font-size:19.5px;line-height:19.5px;color:#000;transform:scaleX(1.0281);transform-origin:100% 50%;-webkit-text-stroke:0.22px #000;">5</span>
<span class="t" style="left:64.29px;top:122px;font-size:19.5px;line-height:19.5px;color:#000;transform:scaleX(1.1053);transform-origin:100% 50%;-webkit-text-stroke:0.22px #000;">1/1/2018</span>
<span class="t" style="left:147.10px;top:122px;font-size:19.5px;line-height:19.5px;color:#000;transform:scaleX(0.9910);transform-origin:0 50%;-webkit-text-stroke:0.22px #000;">UA</span>
<span class="t" style="left:431.52px;top:122px;font-size:19.5px;line-height:19.5px;color:#000;transform:scaleX(1.0281);transform-origin:100% 50%;-webkit-text-stroke:0.22px #000;">2424</span>
<span class="t" style="left:481.60px;top:122px;font-size:19.5px;line-height:19.5px;color:#000;transform:scaleX(0.9242);transform-origin:0 50%;-webkit-text-stroke:0.22px #000;">ORD</span>
<span class="t" style="left:568.10px;top:122px;font-size:19.5px;line-height:19.5px;color:#000;transform:scaleX(0.9209);transform-origin:0 50%;-webkit-text-stroke:0.22px #000;">ALB</span>
<span class="t" style="left:761.86px;top:122px;font-size:19.5px;line-height:19.5px;color:#000;transform:scaleX(1.0281);transform-origin:100% 50%;-webkit-text-stroke:0.22px #000;">630</span>
<span class="t" style="left:883.86px;top:122px;font-size:19.5px;line-height:19.5px;color:#000;transform:scaleX(1.0281);transform-origin:100% 50%;-webkit-text-stroke:0.22px #000;">650</span>
<span class="t" style="left:1023.71px;top:122px;font-size:19.5px;line-height:19.5px;color:#000;transform:scaleX(1.0281);transform-origin:100% 50%;-webkit-text-stroke:0.22px #000;">20</span>
<span class="t" style="left:1134.21px;top:122px;font-size:19.5px;line-height:19.5px;color:#000;transform:scaleX(1.0281);transform-origin:100% 50%;-webkit-text-stroke:0.22px #000;">13</span>
<span class="t" style="left:1258.86px;top:122px;font-size:19.5px;line-height:19.5px;color:#000;transform:scaleX(1.0281);transform-origin:100% 50%;-webkit-text-stroke:0.22px #000;">703</span>
<span class="t" style="left:1391.86px;top:122px;font-size:19.5px;line-height:19.5px;color:#000;transform:scaleX(1.0281);transform-origin:100% 50%;-webkit-text-stroke:0.22px #000;">926</span>
<span class="t" style="left:1498.71px;top:122px;font-size:19.5px;line-height:19.5px;color:#000;transform:scaleX(1.0281);transform-origin:100% 50%;-webkit-text-stroke:0.22px #000;">10</span>
<span class="t" style="left:64.29px;top:151px;font-size:19.5px;line-height:19.5px;color:#000;transform:scaleX(1.1053);transform-origin:100% 50%;-webkit-text-stroke:0.22px #000;">1/1/2018</span>
<span class="t" style="left:147.10px;top:151px;font-size:19.5px;line-height:19.5px;color:#000;transform:scaleX(0.9910);transform-origin:0 50%;-webkit-text-stroke:0.22px #000;">UA</span>
<span class="t" style="left:431.52px;top:151px;font-size:19.5px;line-height:19.5px;color:#000;transform:scaleX(1.0281);transform-origin:100% 50%;-webkit-text-stroke:0.22px #000;">2421</span>
<span class="t" style="left:481.60px;top:151px;font-size:19.5px;line-height:19.5px;color:#000;transform:scaleX(0.9838);transform-origin:0 50%;-webkit-text-stroke:0.22px #000;">IAH</span>
<span class="t" style="left:568.10px;top:151px;font-size:19.5px;line-height:19.5px;color:#000;transform:scaleX(0.8705);transform-origin:0 50%;-webkit-text-stroke:0.22px #000;">LAS</span>
<span class="t" style="left:761.86px;top:151px;font-size:19.5px;line-height:19.5px;color:#000;transform:scaleX(1.0281);transform-origin:100% 50%;-webkit-text-stroke:0.22px #000;">750</span>
<span class="t" style="left:883.86px;top:151px;font-size:19.5px;line-height:19.5px;color:#000;transform:scaleX(1.0281);transform-origin:100% 50%;-webkit-text-stroke:0.22px #000;">747</span>
<span class="t" style="left:1028.06px;top:151px;font-size:19.5px;line-height:19.5px;color:#000;transform:scaleX(1.0315);transform-origin:100% 50%;-webkit-text-stroke:0.22px #000;">-3</span>
<span class="t" style="left:1134.21px;top:151px;font-size:19.5px;line-height:19.5px;color:#000;transform:scaleX(1.0281);transform-origin:100% 50%;-webkit-text-stroke:0.22px #000;">14</span>
<span class="t" style="left:1258.86px;top:151px;font-size:19.5px;line-height:19.5px;color:#000;transform:scaleX(1.0281);transform-origin:100% 50%;-webkit-text-stroke:0.22px #000;">801</span>
<span class="t" style="left:1391.86px;top:151px;font-size:19.5px;line-height:19.5px;color:#000;transform:scaleX(1.0281);transform-origin:100% 50%;-webkit-text-stroke:0.22px #000;">854</span>
<span class="t" style="left:1509.55px;top:151px;font-size:19.5px;line-height:19.5px;color:#000;transform:scaleX(1.0281);transform-origin:100% 50%;-webkit-text-stroke:0.22px #000;">6</span>
<span class="t" style="left:64.29px;top:180px;font-size:19.5px;line-height:19.5px;color:#000;transform:scaleX(1.1053);transform-origin:100% 50%;-webkit-text-stroke:0.22px #000;">1/1/2018</span>
<span class="t" style="left:147.10px;top:180px;font-size:19.5px;line-height:19.5px;color:#000;transform:scaleX(0.9910);transform-origin:0 50%;-webkit-text-stroke:0.22px #000;">UA</span>
<span class="t" style="left:431.52px;top:180px;font-size:19.5px;line-height:19.5px;color:#000;transform:scaleX(1.0281);transform-origin:100% 50%;-webkit-text-stroke:0.22px #000;">2419</span>
<span class="t" style="left:481.60px;top:180px;font-size:19.5px;line-height:19.5px;color:#000;transform:scaleX(0.9481);transform-origin:0 50%;-webkit-text-stroke:0.22px #000;">SMF</span>
<span class="t" style="left:568.10px;top:180px;font-size:19.5px;line-height:19.5px;color:#000;transform:scaleX(0.9289);transform-origin:0 50%;-webkit-text-stroke:0.22px #000;">EWR</span>
<span class="t" style="left:751.02px;top:180px;font-size:19.5px;line-height:19.5px;color:#000;transform:scaleX(1.0281);transform-origin:100% 50%;-webkit-text-stroke:0.22px #000;">2224</span>
<span class="t" style="left:873.02px;top:180px;font-size:19.5px;line-height:19.5px;color:#000;transform:scaleX(1.0281);transform-origin:100% 50%;-webkit-text-stroke:0.22px #000;">2237</span>
<span class="t" style="left:1023.71px;top:180px;font-size:19.5px;line-height:19.5px;color:#000;transform:scaleX(1.0281);transform-origin:100% 50%;-webkit-text-stroke:0.22px #000;">13</span>
<span class="t" style="left:1134.21px;top:180px;font-size:19.5px;line-height:19.5px;color:#000;transform:scaleX(1.0281);transform-origin:100% 50%;-webkit-text-stroke:0.22px #000;">10</span>
<span class="t" style="left:1248.02px;top:180px;font-size:19.5px;line-height:19.5px;color:#000;transform:scaleX(1.0281);transform-origin:100% 50%;-webkit-text-stroke:0.22px #000;">2247</span>
<span class="t" style="left:1391.86px;top:180px;font-size:19.5px;line-height:19.5px;color:#000;transform:scaleX(1.0281);transform-origin:100% 50%;-webkit-text-stroke:0.22px #000;">627</span>
<span class="t" style="left:1509.55px;top:180px;font-size:19.5px;line-height:19.5px;color:#000;transform:scaleX(1.0281);transform-origin:100% 50%;-webkit-text-stroke:0.22px #000;">9</span>
<span class="t" style="left:64.29px;top:209px;font-size:19.5px;line-height:19.5px;color:#000;transform:scaleX(1.1053);transform-origin:100% 50%;-webkit-text-stroke:0.22px #000;">1/1/2018</span>
<span class="t" style="left:147.10px;top:209px;font-size:19.5px;line-height:19.5px;color:#000;transform:scaleX(0.9910);transform-origin:0 50%;-webkit-text-stroke:0.22px #000;">UA</span>
<span class="t" style="left:431.52px;top:209px;font-size:19.5px;line-height:19.5px;color:#000;transform:scaleX(1.0281);transform-origin:100% 50%;-webkit-text-stroke:0.22px #000;">2417</span>
<span class="t" style="left:481.60px;top:209px;font-size:19.5px;line-height:19.5px;color:#000;transform:scaleX(0.9058);transform-origin:0 50%;-webkit-text-stroke:0.22px #000;">PDX</span>
<span class="t" style="left:568.10px;top:209px;font-size:19.5px;line-height:19.5px;color:#000;transform:scaleX(0.9289);transform-origin:0 50%;-webkit-text-stroke:0.22px #000;">EWR</span>
<span class="t" style="left:751.02px;top:209px;font-size:19.5px;line-height:19.5px;color:#000;transform:scaleX(1.0281);transform-origin:100% 50%;-webkit-text-stroke:0.22px #000;">2240</span>
<span class="t" style="left:873.02px;top:209px;font-size:19.5px;line-height:19.5px;color:#000;transform:scaleX(1.0281);transform-origin:100% 50%;-webkit-text-stroke:0.22px #000;">2235</span>
<span class="t" style="left:1028.06px;top:209px;font-size:19.5px;line-height:19.5px;color:#000;transform:scaleX(1.0315);transform-origin:100% 50%;-webkit-text-stroke:0.22px #000;">-5</span>
<span class="t" style="left:1145.05px;top:209px;font-size:19.5px;line-height:19.5px;color:#000;transform:scaleX(1.0281);transform-origin:100% 50%;-webkit-text-stroke:0.22px #000;">9</span>
<span class="t" style="left:1248.02px;top:209px;font-size:19.5px;line-height:19.5px;color:#000;transform:scaleX(1.0281);transform-origin:100% 50%;-webkit-text-stroke:0.22px #000;">2244</span>
<span class="t" style="left:1391.86px;top:209px;font-size:19.5px;line-height:19.5px;color:#000;transform:scaleX(1.0281);transform-origin:100% 50%;-webkit-text-stroke:0.22px #000;">624</span>
<span class="t" style="left:1509.55px;top:209px;font-size:19.5px;line-height:19.5px;color:#000;transform:scaleX(1.0281);transform-origin:100% 50%;-webkit-text-stroke:0.22px #000;">7</span>
<span class="t" style="left:64.29px;top:238px;font-size:19.5px;line-height:19.5px;color:#000;transform:scaleX(1.1053);transform-origin:100% 50%;-webkit-text-stroke:0.22px #000;">1/1/2018</span>
<span class="t" style="left:147.10px;top:238px;font-size:19.5px;line-height:19.5px;color:#000;transform:scaleX(0.9910);transform-origin:0 50%;-webkit-text-stroke:0.22px #000;">UA</span>
<span class="t" style="left:431.52px;top:238px;font-size:19.5px;line-height:19.5px;color:#000;transform:scaleX(1.0281);transform-origin:100% 50%;-webkit-text-stroke:0.22px #000;">2415</span>
<span class="t" style="left:481.60px;top:238px;font-size:19.5px;line-height:19.5px;color:#000;transform:scaleX(0.9289);transform-origin:0 50%;-webkit-text-stroke:0.22px #000;">EWR</span>
<span class="t" style="left:568.10px;top:238px;font-size:19.5px;line-height:19.5px;color:#000;transform:scaleX(0.9058);transform-origin:0 50%;-webkit-text-stroke:0.22px #000;">PDX</span>
<span class="t" style="left:761.86px;top:238px;font-size:19.5px;line-height:19.5px;color:#000;transform:scaleX(1.0281);transform-origin:100% 50%;-webkit-text-stroke:0.22px #000;">825</span>
<span class="t" style="left:883.86px;top:238px;font-size:19.5px;line-height:19.5px;color:#000;transform:scaleX(1.0281);transform-origin:100% 50%;-webkit-text-stroke:0.22px #000;">822</span>
<span class="t" style="left:1028.06px;top:238px;font-size:19.5px;line-height:19.5px;color:#000;transform:scaleX(1.0315);transform-origin:100% 50%;-webkit-text-stroke:0.22px #000;">-3</span>
<span class="t" style="left:1134.21px;top:238px;font-size:19.5px;line-height:19.5px;color:#000;transform:scaleX(1.0281);transform-origin:100% 50%;-webkit-text-stroke:0.22px #000;">15</span>
<span class="t" style="left:1258.86px;top:238px;font-size:19.5px;line-height:19.5px;color:#000;transform:scaleX(1.0281);transform-origin:100% 50%;-webkit-text-stroke:0.22px #000;">837</span>
<span class="t" style="left:1382.47px;top:238px;font-size:19.5px;line-height:19.5px;color:#000;transform:scaleX(1.0636);transform-origin:100% 50%;-webkit-text-stroke:0.22px #000;">1104</span>
<span class="t" style="left:1509.55px;top:238px;font-size:19.5px;line-height:19.5px;color:#000;transform:scaleX(1.0281);transform-origin:100% 50%;-webkit-text-stroke:0.22px #000;">5</span>
<span class="t" style="left:64.29px;top:267px;font-size:19.5px;line-height:19.5px;color:#000;transform:scaleX(1.1053);transform-origin:100% 50%;-webkit-text-stroke:0.22px #000;">1/1/2018</span>
<span class="t" style="left:147.10px;top:267px;font-size:19.5px;line-height:19.5px;color:#000;transform:scaleX(0.9910);transform-origin:0 50%;-webkit-text-stroke:0.22px #000;">UA</span>
<span class="t" style="left:431.52px;top:267px;font-size:19.5px;line-height:19.5px;color:#000;transform:scaleX(1.0281);transform-origin:100% 50%;-webkit-text-stroke:0.22px #000;">2413</span>
<span class="t" style="left:481.60px;top:267px;font-size:19.5px;line-height:19.5px;color:#000;transform:scaleX(0.9242);transform-origin:0 50%;-webkit-text-stroke:0.22px #000;">ORD</span>
<span class="t" style="left:568.10px;top:267px;font-size:19.5px;line-height:19.5px;color:#000;transform:scaleX(0.9273);transform-origin:0 50%;-webkit-text-stroke:0.22px #000;">BTV</span>
<span class="t" style="left:752.47px;top:267px;font-size:19.5px;line-height:19.5px;color:#000;transform:scaleX(1.0636);transform-origin:100% 50%;-webkit-text-stroke:0.22px #000;">2114</span>
<span class="t" style="left:873.02px;top:267px;font-size:19.5px;line-height:19.5px;color:#000;transform:scaleX(1.0281);transform-origin:100% 50%;-webkit-text-stroke:0.22px #000;">2230</span>
<span class="t" style="left:1023.71px;top:267px;font-size:19.5px;line-height:19.5px;color:#000;transform:scaleX(1.0281);transform-origin:100% 50%;-webkit-text-stroke:0.22px #000;">76</span>
<span class="t" style="left:1134.21px;top:267px;font-size:19.5px;line-height:19.5px;color:#000;transform:scaleX(1.0281);transform-origin:100% 50%;-webkit-text-stroke:0.22px #000;">14</span>
<span class="t" style="left:1248.02px;top:267px;font-size:19.5px;line-height:19.5px;color:#000;transform:scaleX(1.0281);transform-origin:100% 50%;-webkit-text-stroke:0.22px #000;">2244</span>
<span class="t" style="left:1391.86px;top:267px;font-size:19.5px;line-height:19.5px;color:#000;transform:scaleX(1.0281);transform-origin:100% 50%;-webkit-text-stroke:0.22px #000;">123</span>
<span class="t" style="left:1509.55px;top:267px;font-size:19.5px;line-height:19.5px;color:#000;transform:scaleX(1.0281);transform-origin:100% 50%;-webkit-text-stroke:0.22px #000;">5</span>
<span class="t" style="left:64.29px;top:296px;font-size:19.5px;line-height:19.5px;color:#000;transform:scaleX(1.1053);transform-origin:100% 50%;-webkit-text-stroke:0.22px #000;">1/1/2018</span>
<span class="t" style="left:147.10px;top:296px;font-size:19.5px;line-height:19.5px;color:#000;transform:scaleX(0.9910);transform-origin:0 50%;-webkit-text-stroke:0.22px #000;">UA</span>
<span class="t" style="left:432.97px;top:296px;font-size:19.5px;line-height:19.5px;color:#000;transform:scaleX(1.0636);transform-origin:100% 50%;-webkit-text-stroke:0.22px #000;">2411</span>
<span class="t" style="left:481.60px;top:296px;font-size:19.5px;line-height:19.5px;color:#000;transform:scaleX(0.9289);transform-origin:0 50%;-webkit-text-stroke:0.22px #000;">EWR</span>
<span class="t" style="left:568.10px;top:296px;font-size:19.5px;line-height:19.5px;color:#000;transform:scaleX(0.9481);transform-origin:0 50%;-webkit-text-stroke:0.22px #000;">SMF</span>
<span class="t" style="left:751.02px;top:296px;font-size:19.5px;line-height:19.5px;color:#000;transform:scaleX(1.0281);transform-origin:100% 50%;-webkit-text-stroke:0.22px #000;">1810</span>
<span class="t" style="left:873.02px;top:296px;font-size:19.5px;line-height:19.5px;color:#000;transform:scaleX(1.0281);transform-origin:100% 50%;-webkit-text-stroke:0.22px #000;">1922</span>
<span class="t" style="left:1023.71px;top:296px;font-size:19.5px;line-height:19.5px;color:#000;transform:scaleX(1.0281);transform-origin:100% 50%;-webkit-text-stroke:0.22px #000;">72</span>
<span class="t" style="left:1134.21px;top:296px;font-size:19.5px;line-height:19.5px;color:#000;transform:scaleX(1.0281);transform-origin:100% 50%;-webkit-text-stroke:0.22px #000;">16</span>
<span class="t" style="left:1248.02px;top:296px;font-size:19.5px;line-height:19.5px;color:#000;transform:scaleX(1.0281);transform-origin:100% 50%;-webkit-text-stroke:0.22px #000;">1938</span>
<span class="t" style="left:1381.02px;top:296px;font-size:19.5px;line-height:19.5px;color:#000;transform:scaleX(1.0281);transform-origin:100% 50%;-webkit-text-stroke:0.22px #000;">2157</span>
<span class="t" style="left:1509.55px;top:296px;font-size:19.5px;line-height:19.5px;color:#000;transform:scaleX(1.0281);transform-origin:100% 50%;-webkit-text-stroke:0.22px #000;">4</span>
<span class="t" style="left:64.29px;top:325px;font-size:19.5px;line-height:19.5px;color:#000;transform:scaleX(1.1053);transform-origin:100% 50%;-webkit-text-stroke:0.22px #000;">1/1/2018</span>
<span class="t" style="left:147.10px;top:325px;font-size:19.5px;line-height:19.5px;color:#000;transform:scaleX(0.9910);transform-origin:0 50%;-webkit-text-stroke:0.22px #000;">UA</span>
<span class="t" style="left:431.52px;top:325px;font-size:19.5px;line-height:19.5px;color:#000;transform:scaleX(1.0281);transform-origin:100% 50%;-webkit-text-stroke:0.22px #000;">2409</span>
<span class="t" style="left:481.60px;top:325px;font-size:19.5px;line-height:19.5px;color:#000;transform:scaleX(0.9838);transform-origin:0 50%;-webkit-text-stroke:0.22px #000;">IAH</span>
<span class="t" style="left:568.10px;top:325px;font-size:19.5px;line-height:19.5px;color:#000;transform:scaleX(0.8544);transform-origin:0 50%;-webkit-text-stroke:0.22px #000;">JAC</span>
<span class="t" style="left:761.86px;top:325px;font-size:19.5px;line-height:19.5px;color:#000;transform:scaleX(1.0281);transform-origin:100% 50%;-webkit-text-stroke:0.22px #000;">940</span>
<span class="t" style="left:883.86px;top:325px;font-size:19.5px;line-height:19.5px;color:#000;transform:scaleX(1.0281);transform-origin:100% 50%;-webkit-text-stroke:0.22px #000;">934</span>
<span class="t" style="left:1028.06px;top:325px;font-size:19.5px;line-height:19.5px;color:#000;transform:scaleX(1.0315);transform-origin:100% 50%;-webkit-text-stroke:0.22px #000;">-6</span>
<span class="t" style="left:1134.21px;top:325px;font-size:19.5px;line-height:19.5px;color:#000;transform:scaleX(1.0281);transform-origin:100% 50%;-webkit-text-stroke:0.22px #000;">18</span>
<span class="t" style="left:1258.86px;top:325px;font-size:19.5px;line-height:19.5px;color:#000;transform:scaleX(1.0281);transform-origin:100% 50%;-webkit-text-stroke:0.22px #000;">952</span>
<span class="t" style="left:1382.47px;top:325px;font-size:19.5px;line-height:19.5px;color:#000;transform:scaleX(1.0636);transform-origin:100% 50%;-webkit-text-stroke:0.22px #000;">1156</span>
<span class="t" style="left:1509.55px;top:325px;font-size:19.5px;line-height:19.5px;color:#000;transform:scaleX(1.0281);transform-origin:100% 50%;-webkit-text-stroke:0.22px #000;">4</span>
<span class="t" style="left:64.29px;top:354px;font-size:19.5px;line-height:19.5px;color:#000;transform:scaleX(1.1053);transform-origin:100% 50%;-webkit-text-stroke:0.22px #000;">1/1/2018</span>
<span class="t" style="left:147.10px;top:354px;font-size:19.5px;line-height:19.5px;color:#000;transform:scaleX(0.9910);transform-origin:0 50%;-webkit-text-stroke:0.22px #000;">UA</span>
<span class="t" style="left:431.52px;top:354px;font-size:19.5px;line-height:19.5px;color:#000;transform:scaleX(1.0281);transform-origin:100% 50%;-webkit-text-stroke:0.22px #000;">2406</span>
<span class="t" style="left:481.60px;top:354px;font-size:19.5px;line-height:19.5px;color:#000;transform:scaleX(0.9289);transform-origin:0 50%;-webkit-text-stroke:0.22px #000;">EWR</span>
<span class="t" style="left:568.10px;top:354px;font-size:19.5px;line-height:19.5px;color:#000;transform:scaleX(0.8319);transform-origin:0 50%;-webkit-text-stroke:0.22px #000;">TYS</span>
<span class="t" style="left:761.86px;top:354px;font-size:19.5px;line-height:19.5px;color:#000;transform:scaleX(1.0281);transform-origin:100% 50%;-webkit-text-stroke:0.22px #000;">830</span>
<span class="t" style="left:883.86px;top:354px;font-size:19.5px;line-height:19.5px;color:#000;transform:scaleX(1.0281);transform-origin:100% 50%;-webkit-text-stroke:0.22px #000;">844</span>
<span class="t" style="left:1023.71px;top:354px;font-size:19.5px;line-height:19.5px;color:#000;transform:scaleX(1.0281);transform-origin:100% 50%;-webkit-text-stroke:0.22px #000;">14</span>
<span class="t" style="left:1134.21px;top:354px;font-size:19.5px;line-height:19.5px;color:#000;transform:scaleX(1.0281);transform-origin:100% 50%;-webkit-text-stroke:0.22px #000;">20</span>
<span class="t" style="left:1258.86px;top:354px;font-size:19.5px;line-height:19.5px;color:#000;transform:scaleX(1.0281);transform-origin:100% 50%;-webkit-text-stroke:0.22px #000;">904</span>
<span class="t" style="left:1381.02px;top:354px;font-size:19.5px;line-height:19.5px;color:#000;transform:scaleX(1.0281);transform-origin:100% 50%;-webkit-text-stroke:0.22px #000;">1052</span>
<span class="t" style="left:1509.55px;top:354px;font-size:19.5px;line-height:19.5px;color:#000;transform:scaleX(1.0281);transform-origin:100% 50%;-webkit-text-stroke:0.22px #000;">3</span>
<span class="t" style="left:64.29px;top:383px;font-size:19.5px;line-height:19.5px;color:#000;transform:scaleX(1.1053);transform-origin:100% 50%;-webkit-text-stroke:0.22px #000;">1/1/2018</span>
<span class="t" style="left:147.10px;top:383px;font-size:19.5px;line-height:19.5px;color:#000;transform:scaleX(0.9910);transform-origin:0 50%;-webkit-text-stroke:0.22px #000;">UA</span>
<span class="t" style="left:431.52px;top:383px;font-size:19.5px;line-height:19.5px;color:#000;transform:scaleX(1.0281);transform-origin:100% 50%;-webkit-text-stroke:0.22px #000;">2404</span>
<span class="t" style="left:481.60px;top:383px;font-size:19.5px;line-height:19.5px;color:#000;transform:scaleX(0.9150);transform-origin:0 50%;-webkit-text-stroke:0.22px #000;">RSW</span>
<span class="t" style="left:568.10px;top:383px;font-size:19.5px;line-height:19.5px;color:#000;transform:scaleX(0.9242);transform-origin:0 50%;-webkit-text-stroke:0.22px #000;">ORD</span>
<span class="t" style="left:751.02px;top:383px;font-size:19.5px;line-height:19.5px;color:#000;transform:scaleX(1.0281);transform-origin:100% 50%;-webkit-text-stroke:0.22px #000;">1220</span>
<span class="t" style="left:873.02px;top:383px;font-size:19.5px;line-height:19.5px;color:#000;transform:scaleX(1.0281);transform-origin:100% 50%;-webkit-text-stroke:0.22px #000;">1213</span>
<span class="t" style="left:1028.06px;top:383px;font-size:19.5px;line-height:19.5px;color:#000;transform:scaleX(1.0315);transform-origin:100% 50%;-webkit-text-stroke:0.22px #000;">-7</span>
<span class="t" style="left:1134.21px;top:383px;font-size:19.5px;line-height:19.5px;color:#000;transform:scaleX(1.0281);transform-origin:100% 50%;-webkit-text-stroke:0.22px #000;">25</span>
<span class="t" style="left:1248.02px;top:383px;font-size:19.5px;line-height:19.5px;color:#000;transform:scaleX(1.0281);transform-origin:100% 50%;-webkit-text-stroke:0.22px #000;">1238</span>
<span class="t" style="left:1381.02px;top:383px;font-size:19.5px;line-height:19.5px;color:#000;transform:scaleX(1.0281);transform-origin:100% 50%;-webkit-text-stroke:0.22px #000;">1419</span>
<span class="t" style="left:1509.55px;top:383px;font-size:19.5px;line-height:19.5px;color:#000;transform:scaleX(1.0281);transform-origin:100% 50%;-webkit-text-stroke:0.22px #000;">3</span>
<span class="t" style="left:64.29px;top:412px;font-size:19.5px;line-height:19.5px;color:#000;transform:scaleX(1.1053);transform-origin:100% 50%;-webkit-text-stroke:0.22px #000;">1/1/2018</span>
<span class="t" style="left:147.10px;top:412px;font-size:19.5px;line-height:19.5px;color:#000;transform:scaleX(0.9910);transform-origin:0 50%;-webkit-text-stroke:0.22px #000;">UA</span>
<span class="t" style="left:431.52px;top:412px;font-size:19.5px;line-height:19.5px;color:#000;transform:scaleX(1.0281);transform-origin:100% 50%;-webkit-text-stroke:0.22px #000;">2402</span>
<span class="t" style="left:481.60px;top:412px;font-size:19.5px;line-height:19.5px;color:#000;transform:scaleX(0.8544);transform-origin:0 50%;-webkit-text-stroke:0.22px #000;">JAC</span>
<span class="t" style="left:568.10px;top:412px;font-size:19.5px;line-height:19.5px;color:#000;transform:scaleX(0.9289);transform-origin:0 50%;-webkit-text-stroke:0.22px #000;">EWR</span>
<span class="t" style="left:751.02px;top:412px;font-size:19.5px;line-height:19.5px;color:#000;transform:scaleX(1.0281);transform-origin:100% 50%;-webkit-text-stroke:0.22px #000;">1343</span>
<span class="t" style="left:873.02px;top:412px;font-size:19.5px;line-height:19.5px;color:#000;transform:scaleX(1.0281);transform-origin:100% 50%;-webkit-text-stroke:0.22px #000;">1351</span>
<span class="t" style="left:1034.55px;top:412px;font-size:19.5px;line-height:19.5px;color:#000;transform:scaleX(1.0281);transform-origin:100% 50%;-webkit-text-stroke:0.22px #000;">8</span>
<span class="t" style="left:1134.21px;top:412px;font-size:19.5px;line-height:19.5px;color:#000;transform:scaleX(1.0281);transform-origin:100% 50%;-webkit-text-stroke:0.22px #000;">38</span>
<span class="t" style="left:1248.02px;top:412px;font-size:19.5px;line-height:19.5px;color:#000;transform:scaleX(1.0281);transform-origin:100% 50%;-webkit-text-stroke:0.22px #000;">1429</span>
<span class="t" style="left:1381.02px;top:412px;font-size:19.5px;line-height:19.5px;color:#000;transform:scaleX(1.0281);transform-origin:100% 50%;-webkit-text-stroke:0.22px #000;">2003</span>
<span class="t" style="left:1498.71px;top:412px;font-size:19.5px;line-height:19.5px;color:#000;transform:scaleX(1.0281);transform-origin:100% 50%;-webkit-text-stroke:0.22px #000;">10</span>
<span class="t" style="left:64.29px;top:441px;font-size:19.5px;line-height:19.5px;color:#000;transform:scaleX(1.1053);transform-origin:100% 50%;-webkit-text-stroke:0.22px #000;">1/1/2018</span>
<span class="t" style="left:147.10px;top:441px;font-size:19.5px;line-height:19.5px;color:#000;transform:scaleX(0.9910);transform-origin:0 50%;-webkit-text-stroke:0.22px #000;">UA</span>
<span class="t" style="left:431.52px;top:441px;font-size:19.5px;line-height:19.5px;color:#000;transform:scaleX(1.0281);transform-origin:100% 50%;-webkit-text-stroke:0.22px #000;">2399</span>
<span class="t" style="left:481.60px;top:441px;font-size:19.5px;line-height:19.5px;color:#000;transform:scaleX(0.9242);transform-origin:0 50%;-webkit-text-stroke:0.22px #000;">ORD</span>
<span class="t" style="left:568.10px;top:441px;font-size:19.5px;line-height:19.5px;color:#000;transform:scaleX(1.0696);transform-origin:0 50%;-webkit-text-stroke:0.22px #000;">MIA</span>
<span class="t" style="left:751.02px;top:441px;font-size:19.5px;line-height:19.5px;color:#000;transform:scaleX(1.0281);transform-origin:100% 50%;-webkit-text-stroke:0.22px #000;">1405</span>
<span class="t" style="left:873.02px;top:441px;font-size:19.5px;line-height:19.5px;color:#000;transform:scaleX(1.0281);transform-origin:100% 50%;-webkit-text-stroke:0.22px #000;">1402</span>
<span class="t" style="left:1028.06px;top:441px;font-size:19.5px;line-height:19.5px;color:#000;transform:scaleX(1.0315);transform-origin:100% 50%;-webkit-text-stroke:0.22px #000;">-3</span>
<span class="t" style="left:1134.21px;top:441px;font-size:19.5px;line-height:19.5px;color:#000;transform:scaleX(1.0281);transform-origin:100% 50%;-webkit-text-stroke:0.22px #000;">18</span>
<span class="t" style="left:1248.02px;top:441px;font-size:19.5px;line-height:19.5px;color:#000;transform:scaleX(1.0281);transform-origin:100% 50%;-webkit-text-stroke:0.22px #000;">1420</span>
<span class="t" style="left:1381.02px;top:441px;font-size:19.5px;line-height:19.5px;color:#000;transform:scaleX(1.0281);transform-origin:100% 50%;-webkit-text-stroke:0.22px #000;">1757</span>
<span class="t" style="left:1509.55px;top:441px;font-size:19.5px;line-height:19.5px;color:#000;transform:scaleX(1.0281);transform-origin:100% 50%;-webkit-text-stroke:0.22px #000;">9</span>
<span class="t" style="left:64.29px;top:470px;font-size:19.5px;line-height:19.5px;color:#000;transform:scaleX(1.1053);transform-origin:100% 50%;-webkit-text-stroke:0.22px #000;">1/1/2018</span>
<span class="t" style="left:147.10px;top:470px;font-size:19.5px;line-height:19.5px;color:#000;transform:scaleX(0.9910);transform-origin:0 50%;-webkit-text-stroke:0.22px #000;">UA</span>
<span class="t" style="left:431.52px;top:470px;font-size:19.5px;line-height:19.5px;color:#000;transform:scaleX(1.0281);transform-origin:100% 50%;-webkit-text-stroke:0.22px #000;">2397</span>
<span class="t" style="left:481.60px;top:470px;font-size:19.5px;line-height:19.5px;color:#000;transform:scaleX(1.0696);transform-origin:0 50%;-webkit-text-stroke:0.22px #000;">MIA</span>
<span class="t" style="left:568.10px;top:470px;font-size:19.5px;line-height:19.5px;color:#000;transform:scaleX(0.9838);transform-origin:0 50%;-webkit-text-stroke:0.22px #000;">IAH</span>
<span class="t" style="left:761.86px;top:470px;font-size:19.5px;line-height:19.5px;color:#000;transform:scaleX(1.0281);transform-origin:100% 50%;-webkit-text-stroke:0.22px #000;">900</span>
<span class="t" style="left:883.86px;top:470px;font-size:19.5px;line-height:19.5px;color:#000;transform:scaleX(1.0281);transform-origin:100% 50%;-webkit-text-stroke:0.22px #000;">859</span>
<span class="t" style="left:1028.06px;top:470px;font-size:19.5px;line-height:19.5px;color:#000;transform:scaleX(1.0315);transform-origin:100% 50%;-webkit-text-stroke:0.22px #000;">-1</span>
<span class="t" style="left:1134.21px;top:470px;font-size:19.5px;line-height:19.5px;color:#000;transform:scaleX(1.0281);transform-origin:100% 50%;-webkit-text-stroke:0.22px #000;">17</span>
<span class="t" style="left:1258.86px;top:470px;font-size:19.5px;line-height:19.5px;color:#000;transform:scaleX(1.0281);transform-origin:100% 50%;-webkit-text-stroke:0.22px #000;">916</span>
<span class="t" style="left:1381.02px;top:470px;font-size:19.5px;line-height:19.5px;color:#000;transform:scaleX(1.0281);transform-origin:100% 50%;-webkit-text-stroke:0.22px #000;">1048</span>
<span class="t" style="left:1509.55px;top:470px;font-size:19.5px;line-height:19.5px;color:#000;transform:scaleX(1.0281);transform-origin:100% 50%;-webkit-text-stroke:0.22px #000;">6</span>
<span class="t" style="left:64.29px;top:499px;font-size:19.5px;line-height:19.5px;color:#000;transform:scaleX(1.1053);transform-origin:100% 50%;-webkit-text-stroke:0.22px #000;">1/1/2018</span>
<span class="t" style="left:147.10px;top:499px;font-size:19.5px;line-height:19.5px;color:#000;transform:scaleX(0.9910);transform-origin:0 50%;-webkit-text-stroke:0.22px #000;">UA</span>
<span class="t" style="left:431.52px;top:499px;font-size:19.5px;line-height:19.5px;color:#000;transform:scaleX(1.0281);transform-origin:100% 50%;-webkit-text-stroke:0.22px #000;">2393</span>
<span class="t" style="left:481.60px;top:499px;font-size:19.5px;line-height:19.5px;color:#000;transform:scaleX(0.8606);transform-origin:0 50%;-webkit-text-stroke:0.22px #000;">SEA</span>
<span class="t" style="left:568.10px;top:499px;font-size:19.5px;line-height:19.5px;color:#000;transform:scaleX(0.9838);transform-origin:0 50%;-webkit-text-stroke:0.22px #000;">IAH</span>
<span class="t" style="left:772.71px;top:499px;font-size:19.5px;line-height:19.5px;color:#000;transform:scaleX(1.0281);transform-origin:100% 50%;-webkit-text-stroke:0.22px #000;">27</span>
<span class="t" style="left:894.71px;top:499px;font-size:19.5px;line-height:19.5px;color:#000;transform:scaleX(1.0281);transform-origin:100% 50%;-webkit-text-stroke:0.22px #000;">15</span>
<span class="t" style="left:1017.21px;top:499px;font-size:19.5px;line-height:19.5px;color:#000;transform:scaleX(1.0302);transform-origin:100% 50%;-webkit-text-stroke:0.22px #000;">-12</span>
<span class="t" style="left:1134.21px;top:499px;font-size:19.5px;line-height:19.5px;color:#000;transform:scaleX(1.0281);transform-origin:100% 50%;-webkit-text-stroke:0.22px #000;">15</span>
<span class="t" style="left:1269.71px;top:499px;font-size:19.5px;line-height:19.5px;color:#000;transform:scaleX(1.0281);transform-origin:100% 50%;-webkit-text-stroke:0.22px #000;">30</span>
<span class="t" style="left:1391.86px;top:499px;font-size:19.5px;line-height:19.5px;color:#000;transform:scaleX(1.0281);transform-origin:100% 50%;-webkit-text-stroke:0.22px #000;">601</span>
<span class="t" style="left:1500.16px;top:499px;font-size:19.5px;line-height:19.5px;color:#000;transform:scaleX(1.1016);transform-origin:100% 50%;-webkit-text-stroke:0.22px #000;">11</span>
<span class="t" style="left:64.29px;top:528px;font-size:19.5px;line-height:19.5px;color:#000;transform:scaleX(1.1053);transform-origin:100% 50%;-webkit-text-stroke:0.22px #000;">1/1/2018</span>
<span class="t" style="left:147.10px;top:528px;font-size:19.5px;line-height:19.5px;color:#000;transform:scaleX(0.9910);transform-origin:0 50%;-webkit-text-stroke:0.22px #000;">UA</span>
<span class="t" style="left:431.52px;top:528px;font-size:19.5px;line-height:19.5px;color:#000;transform:scaleX(1.0281);transform-origin:100% 50%;-webkit-text-stroke:0.22px #000;">2391</span>
<span class="t" style="left:481.60px;top:528px;font-size:19.5px;line-height:19.5px;color:#000;transform:scaleX(0.8195);transform-origin:0 50%;-webkit-text-stroke:0.22px #000;">SLC</span>
<span class="t" style="left:568.10px;top:528px;font-size:19.5px;line-height:19.5px;color:#000;transform:scaleX(0.9289);transform-origin:0 50%;-webkit-text-stroke:0.22px #000;">EWR</span>
<span class="t" style="left:751.02px;top:528px;font-size:19.5px;line-height:19.5px;color:#000;transform:scaleX(1.0281);transform-origin:100% 50%;-webkit-text-stroke:0.22px #000;">1318</span>
<span class="t" style="left:873.02px;top:528px;font-size:19.5px;line-height:19.5px;color:#000;transform:scaleX(1.0281);transform-origin:100% 50%;-webkit-text-stroke:0.22px #000;">1314</span>
<span class="t" style="left:1028.06px;top:528px;font-size:19.5px;line-height:19.5px;color:#000;transform:scaleX(1.0315);transform-origin:100% 50%;-webkit-text-stroke:0.22px #000;">-4</span>
<span class="t" style="left:1134.21px;top:528px;font-size:19.5px;line-height:19.5px;color:#000;transform:scaleX(1.0281);transform-origin:100% 50%;-webkit-text-stroke:0.22px #000;">10</span>
<span class="t" style="left:1248.02px;top:528px;font-size:19.5px;line-height:19.5px;color:#000;transform:scaleX(1.0281);transform-origin:100% 50%;-webkit-text-stroke:0.22px #000;">1324</span>
<span class="t" style="left:1381.02px;top:528px;font-size:19.5px;line-height:19.5px;color:#000;transform:scaleX(1.0281);transform-origin:100% 50%;-webkit-text-stroke:0.22px #000;">1905</span>
<span class="t" style="left:1509.55px;top:528px;font-size:19.5px;line-height:19.5px;color:#000;transform:scaleX(1.0281);transform-origin:100% 50%;-webkit-text-stroke:0.22px #000;">7</span>
<span class="t" style="left:64.29px;top:557px;font-size:19.5px;line-height:19.5px;color:#000;transform:scaleX(1.1053);transform-origin:100% 50%;-webkit-text-stroke:0.22px #000;">1/1/2018</span>
<span class="t" style="left:147.10px;top:557px;font-size:19.5px;line-height:19.5px;color:#000;transform:scaleX(0.9910);transform-origin:0 50%;-webkit-text-stroke:0.22px #000;">UA</span>
<span class="t" style="left:431.52px;top:557px;font-size:19.5px;line-height:19.5px;color:#000;transform:scaleX(1.0281);transform-origin:100% 50%;-webkit-text-stroke:0.22px #000;">2389</span>
<span class="t" style="left:481.60px;top:557px;font-size:19.5px;line-height:19.5px;color:#000;transform:scaleX(0.9380);transform-origin:0 50%;-webkit-text-stroke:0.22px #000;">MSY</span>
<span class="t" style="left:568.10px;top:557px;font-size:19.5px;line-height:19.5px;color:#000;transform:scaleX(0.9785);transform-origin:0 50%;-webkit-text-stroke:0.22px #000;">IAD</span>
<span class="t" style="left:751.02px;top:557px;font-size:19.5px;line-height:19.5px;color:#000;transform:scaleX(1.0281);transform-origin:100% 50%;-webkit-text-stroke:0.22px #000;">1758</span>
<span class="t" style="left:873.02px;top:557px;font-size:19.5px;line-height:19.5px;color:#000;transform:scaleX(1.0281);transform-origin:100% 50%;-webkit-text-stroke:0.22px #000;">1751</span>
<span class="t" style="left:1028.06px;top:557px;font-size:19.5px;line-height:19.5px;color:#000;transform:scaleX(1.0315);transform-origin:100% 50%;-webkit-text-stroke:0.22px #000;">-7</span>
<span class="t" style="left:1134.21px;top:557px;font-size:19.5px;line-height:19.5px;color:#000;transform:scaleX(1.0281);transform-origin:100% 50%;-webkit-text-stroke:0.22px #000;">13</span>
<span class="t" style="left:1248.02px;top:557px;font-size:19.5px;line-height:19.5px;color:#000;transform:scaleX(1.0281);transform-origin:100% 50%;-webkit-text-stroke:0.22px #000;">1804</span>
<span class="t" style="left:1381.02px;top:557px;font-size:19.5px;line-height:19.5px;color:#000;transform:scaleX(1.0281);transform-origin:100% 50%;-webkit-text-stroke:0.22px #000;">2056</span>
<span class="t" style="left:1509.55px;top:557px;font-size:19.5px;line-height:19.5px;color:#000;transform:scaleX(1.0281);transform-origin:100% 50%;-webkit-text-stroke:0.22px #000;">3</span>
<span class="t" style="left:64.29px;top:586px;font-size:19.5px;line-height:19.5px;color:#000;transform:scaleX(1.1053);transform-origin:100% 50%;-webkit-text-stroke:0.22px #000;">1/1/2018</span>
<span class="t" style="left:147.10px;top:586px;font-size:19.5px;line-height:19.5px;color:#000;transform:scaleX(0.9910);transform-origin:0 50%;-webkit-text-stroke:0.22px #000;">UA</span>
<span class="t" style="left:431.52px;top:586px;font-size:19.5px;line-height:19.5px;color:#000;transform:scaleX(1.0281);transform-origin:100% 50%;-webkit-text-stroke:0.22px #000;">2386</span>
<span class="t" style="left:481.60px;top:586px;font-size:19.5px;line-height:19.5px;color:#000;transform:scaleX(0.9242);transform-origin:0 50%;-webkit-text-stroke:0.22px #000;">ORD</span>
<span class="t" style="left:568.10px;top:586px;font-size:19.5px;line-height:19.5px;color:#000;transform:scaleX(0.9150);transform-origin:0 50%;-webkit-text-stroke:0.22px #000;">RSW</span>
<span class="t" style="left:751.02px;top:586px;font-size:19.5px;line-height:19.5px;color:#000;transform:scaleX(1.0281);transform-origin:100% 50%;-webkit-text-stroke:0.22px #000;">1350</span>
<span class="t" style="left:873.02px;top:586px;font-size:19.5px;line-height:19.5px;color:#000;transform:scaleX(1.0281);transform-origin:100% 50%;-webkit-text-stroke:0.22px #000;">1348</span>
<span class="t" style="left:1028.06px;top:586px;font-size:19.5px;line-height:19.5px;color:#000;transform:scaleX(1.0315);transform-origin:100% 50%;-webkit-text-stroke:0.22px #000;">-2</span>
<span class="t" style="left:1134.21px;top:586px;font-size:19.5px;line-height:19.5px;color:#000;transform:scaleX(1.0281);transform-origin:100% 50%;-webkit-text-stroke:0.22px #000;">23</span>
<span class="t" style="left:1249.47px;top:586px;font-size:19.5px;line-height:19.5px;color:#000;transform:scaleX(1.0636);transform-origin:100% 50%;-webkit-text-stroke:0.22px #000;">1411</span>
<span class="t" style="left:1381.02px;top:586px;font-size:19.5px;line-height:19.5px;color:#000;transform:scaleX(1.0281);transform-origin:100% 50%;-webkit-text-stroke:0.22px #000;">1733</span>
<span class="t" style="left:1509.55px;top:586px;font-size:19.5px;line-height:19.5px;color:#000;transform:scaleX(1.0281);transform-origin:100% 50%;-webkit-text-stroke:0.22px #000;">4</span>
<span class="t" style="left:64.29px;top:615px;font-size:19.5px;line-height:19.5px;color:#000;transform:scaleX(1.1053);transform-origin:100% 50%;-webkit-text-stroke:0.22px #000;">1/1/2018</span>
<span class="t" style="left:147.10px;top:615px;font-size:19.5px;line-height:19.5px;color:#000;transform:scaleX(0.9910);transform-origin:0 50%;-webkit-text-stroke:0.22px #000;">UA</span>
<span class="t" style="left:431.52px;top:615px;font-size:19.5px;line-height:19.5px;color:#000;transform:scaleX(1.0281);transform-origin:100% 50%;-webkit-text-stroke:0.22px #000;">2385</span>
<span class="t" style="left:481.60px;top:615px;font-size:19.5px;line-height:19.5px;color:#000;transform:scaleX(0.9346);transform-origin:0 50%;-webkit-text-stroke:0.22px #000;">DEN</span>
<span class="t" style="left:568.10px;top:615px;font-size:19.5px;line-height:19.5px;color:#000;transform:scaleX(0.9242);transform-origin:0 50%;-webkit-text-stroke:0.22px #000;">ORD</span>
<span class="t" style="left:761.86px;top:615px;font-size:19.5px;line-height:19.5px;color:#000;transform:scaleX(1.0281);transform-origin:100% 50%;-webkit-text-stroke:0.22px #000;">915</span>
<span class="t" style="left:883.86px;top:615px;font-size:19.5px;line-height:19.5px;color:#000;transform:scaleX(1.0281);transform-origin:100% 50%;-webkit-text-stroke:0.22px #000;">909</span>
<span class="t" style="left:1028.06px;top:615px;font-size:19.5px;line-height:19.5px;color:#000;transform:scaleX(1.0315);transform-origin:100% 50%;-webkit-text-stroke:0.22px #000;">-6</span>
<span class="t" style="left:1134.21px;top:615px;font-size:19.5px;line-height:19.5px;color:#000;transform:scaleX(1.0281);transform-origin:100% 50%;-webkit-text-stroke:0.22px #000;">12</span>
<span class="t" style="left:1258.86px;top:615px;font-size:19.5px;line-height:19.5px;color:#000;transform:scaleX(1.0281);transform-origin:100% 50%;-webkit-text-stroke:0.22px #000;">921</span>
<span class="t" style="left:1381.02px;top:615px;font-size:19.5px;line-height:19.5px;color:#000;transform:scaleX(1.0281);transform-origin:100% 50%;-webkit-text-stroke:0.22px #000;">1216</span>
<span class="t" style="left:1498.71px;top:615px;font-size:19.5px;line-height:19.5px;color:#000;transform:scaleX(1.0281);transform-origin:100% 50%;-webkit-text-stroke:0.22px #000;">19</span>
<span class="t" style="left:64.29px;top:644px;font-size:19.5px;line-height:19.5px;color:#000;transform:scaleX(1.1053);transform-origin:100% 50%;-webkit-text-stroke:0.22px #000;">1/1/2018</span>
<span class="t" style="left:147.10px;top:644px;font-size:19.5px;line-height:19.5px;color:#000;transform:scaleX(0.9910);transform-origin:0 50%;-webkit-text-stroke:0.22px #000;">UA</span>
<span class="t" style="left:431.52px;top:644px;font-size:19.5px;line-height:19.5px;color:#000;transform:scaleX(1.0281);transform-origin:100% 50%;-webkit-text-stroke:0.22px #000;">2381</span>
<span class="t" style="left:481.60px;top:644px;font-size:19.5px;line-height:19.5px;color:#000;transform:scaleX(1.0696);transform-origin:0 50%;-webkit-text-stroke:0.22px #000;">MIA</span>
<span class="t" style="left:568.10px;top:644px;font-size:19.5px;line-height:19.5px;color:#000;transform:scaleX(0.9242);transform-origin:0 50%;-webkit-text-stroke:0.22px #000;">ORD</span>
<span class="t" style="left:761.86px;top:644px;font-size:19.5px;line-height:19.5px;color:#000;transform:scaleX(1.0281);transform-origin:100% 50%;-webkit-text-stroke:0.22px #000;">729</span>
<span class="t" style="left:883.86px;top:644px;font-size:19.5px;line-height:19.5px;color:#000;transform:scaleX(1.0281);transform-origin:100% 50%;-webkit-text-stroke:0.22px #000;">727</span>
<span class="t" style="left:1028.06px;top:644px;font-size:19.5px;line-height:19.5px;color:#000;transform:scaleX(1.0315);transform-origin:100% 50%;-webkit-text-stroke:0.22px #000;">-2</span>
<span class="t" style="left:1134.21px;top:644px;font-size:19.5px;line-height:19.5px;color:#000;transform:scaleX(1.0281);transform-origin:100% 50%;-webkit-text-stroke:0.22px #000;">14</span>
<span class="t" style="left:1258.86px;top:644px;font-size:19.5px;line-height:19.5px;color:#000;transform:scaleX(1.0281);transform-origin:100% 50%;-webkit-text-stroke:0.22px #000;">741</span>
<span class="t" style="left:1391.86px;top:644px;font-size:19.5px;line-height:19.5px;color:#000;transform:scaleX(1.0281);transform-origin:100% 50%;-webkit-text-stroke:0.22px #000;">925</span>
<span class="t" style="left:1500.16px;top:644px;font-size:19.5px;line-height:19.5px;color:#000;transform:scaleX(1.1016);transform-origin:100% 50%;-webkit-text-stroke:0.22px #000;">11</span>
<span class="t" style="left:64.29px;top:673px;font-size:19.5px;line-height:19.5px;color:#000;transform:scaleX(1.1053);transform-origin:100% 50%;-webkit-text-stroke:0.22px #000;">1/1/2018</span>
<span class="t" style="left:147.10px;top:673px;font-size:19.5px;line-height:19.5px;color:#000;transform:scaleX(0.9910);transform-origin:0 50%;-webkit-text-stroke:0.22px #000;">UA</span>
<span class="t" style="left:431.52px;top:673px;font-size:19.5px;line-height:19.5px;color:#000;transform:scaleX(1.0281);transform-origin:100% 50%;-webkit-text-stroke:0.22px #000;">2380</span>
<span class="t" style="left:481.60px;top:673px;font-size:19.5px;line-height:19.5px;color:#000;transform:scaleX(0.8513);transform-origin:0 50%;-webkit-text-stroke:0.22px #000;">FLL</span>
<span class="t" style="left:568.10px;top:673px;font-size:19.5px;line-height:19.5px;color:#000;transform:scaleX(0.9289);transform-origin:0 50%;-webkit-text-stroke:0.22px #000;">EWR</span>
<span class="t" style="left:751.02px;top:673px;font-size:19.5px;line-height:19.5px;color:#000;transform:scaleX(1.0281);transform-origin:100% 50%;-webkit-text-stroke:0.22px #000;">2025</span>
<span class="t" style="left:873.02px;top:673px;font-size:19.5px;line-height:19.5px;color:#000;transform:scaleX(1.0281);transform-origin:100% 50%;-webkit-text-stroke:0.22px #000;">2029</span>
<span class="t" style="left:1034.55px;top:673px;font-size:19.5px;line-height:19.5px;color:#000;transform:scaleX(1.0281);transform-origin:100% 50%;-webkit-text-stroke:0.22px #000;">4</span>
<span class="t" style="left:1134.21px;top:673px;font-size:19.5px;line-height:19.5px;color:#000;transform:scaleX(1.0281);transform-origin:100% 50%;-webkit-text-stroke:0.22px #000;">13</span>
<span class="t" style="left:1248.02px;top:673px;font-size:19.5px;line-height:19.5px;color:#000;transform:scaleX(1.0281);transform-origin:100% 50%;-webkit-text-stroke:0.22px #000;">2042</span>
<span class="t" style="left:1381.02px;top:673px;font-size:19.5px;line-height:19.5px;color:#000;transform:scaleX(1.0281);transform-origin:100% 50%;-webkit-text-stroke:0.22px #000;">2301</span>
<span class="t" style="left:1509.55px;top:673px;font-size:19.5px;line-height:19.5px;color:#000;transform:scaleX(1.0281);transform-origin:100% 50%;-webkit-text-stroke:0.22px #000;">5</span>
<span class="t" style="left:64.29px;top:702px;font-size:19.5px;line-height:19.5px;color:#000;transform:scaleX(1.1053);transform-origin:100% 50%;-webkit-text-stroke:0.22px #000;">1/1/2018</span>
<span class="t" style="left:147.10px;top:702px;font-size:19.5px;line-height:19.5px;color:#000;transform:scaleX(0.9910);transform-origin:0 50%;-webkit-text-stroke:0.22px #000;">UA</span>
<span class="t" style="left:431.52px;top:702px;font-size:19.5px;line-height:19.5px;color:#000;transform:scaleX(1.0281);transform-origin:100% 50%;-webkit-text-stroke:0.22px #000;">2172</span>
<span class="t" style="left:481.60px;top:702px;font-size:19.5px;line-height:19.5px;color:#000;transform:scaleX(0.9289);transform-origin:0 50%;-webkit-text-stroke:0.22px #000;">EWR</span>
<span class="t" style="left:568.10px;top:702px;font-size:19.5px;line-height:19.5px;color:#000;transform:scaleX(0.9838);transform-origin:0 50%;-webkit-text-stroke:0.22px #000;">IAH</span>
<span class="t" style="left:751.02px;top:702px;font-size:19.5px;line-height:19.5px;color:#000;transform:scaleX(1.0281);transform-origin:100% 50%;-webkit-text-stroke:0.22px #000;">1959</span>
<span class="t" style="left:873.02px;top:702px;font-size:19.5px;line-height:19.5px;color:#000;transform:scaleX(1.0281);transform-origin:100% 50%;-webkit-text-stroke:0.22px #000;">2000</span>
<span class="t" style="left:1034.55px;top:702px;font-size:19.5px;line-height:19.5px;color:#000;transform:scaleX(1.0281);transform-origin:100% 50%;-webkit-text-stroke:0.22px #000;">1</span>
<span class="t" style="left:1134.21px;top:702px;font-size:19.5px;line-height:19.5px;color:#000;transform:scaleX(1.0281);transform-origin:100% 50%;-webkit-text-stroke:0.22px #000;">22</span>
<span class="t" style="left:1248.02px;top:702px;font-size:19.5px;line-height:19.5px;color:#000;transform:scaleX(1.0281);transform-origin:100% 50%;-webkit-text-stroke:0.22px #000;">2022</span>
<span class="t" style="left:1381.02px;top:702px;font-size:19.5px;line-height:19.5px;color:#000;transform:scaleX(1.0281);transform-origin:100% 50%;-webkit-text-stroke:0.22px #000;">2248</span>
<span class="t" style="left:1509.55px;top:702px;font-size:19.5px;line-height:19.5px;color:#000;transform:scaleX(1.0281);transform-origin:100% 50%;-webkit-text-stroke:0.22px #000;">5</span>
<span class="t" style="left:64.29px;top:731px;font-size:19.5px;line-height:19.5px;color:#000;transform:scaleX(1.1053);transform-origin:100% 50%;-webkit-text-stroke:0.22px #000;">1/1/2018</span>
<span class="t" style="left:147.10px;top:731px;font-size:19.5px;line-height:19.5px;color:#000;transform:scaleX(0.9910);transform-origin:0 50%;-webkit-text-stroke:0.22px #000;">UA</span>
<span class="t" style="left:431.52px;top:731px;font-size:19.5px;line-height:19.5px;color:#000;transform:scaleX(1.0281);transform-origin:100% 50%;-webkit-text-stroke:0.22px #000;">2170</span>
<span class="t" style="left:481.60px;top:731px;font-size:19.5px;line-height:19.5px;color:#000;transform:scaleX(0.9346);transform-origin:0 50%;-webkit-text-stroke:0.22px #000;">DEN</span>
<span class="t" style="left:568.10px;top:731px;font-size:19.5px;line-height:19.5px;color:#000;transform:scaleX(0.8195);transform-origin:0 50%;-webkit-text-stroke:0.22px #000;">SLC</span>
<span class="t" style="left:751.02px;top:731px;font-size:19.5px;line-height:19.5px;color:#000;transform:scaleX(1.0281);transform-origin:100% 50%;-webkit-text-stroke:0.22px #000;">2220</span>
<span class="t" style="left:873.02px;top:731px;font-size:19.5px;line-height:19.5px;color:#000;transform:scaleX(1.0281);transform-origin:100% 50%;-webkit-text-stroke:0.22px #000;">2216</span>
<span class="t" style="left:1028.06px;top:731px;font-size:19.5px;line-height:19.5px;color:#000;transform:scaleX(1.0315);transform-origin:100% 50%;-webkit-text-stroke:0.22px #000;">-4</span>
<span class="t" style="left:1134.21px;top:731px;font-size:19.5px;line-height:19.5px;color:#000;transform:scaleX(1.0281);transform-origin:100% 50%;-webkit-text-stroke:0.22px #000;">24</span>
<span class="t" style="left:1248.02px;top:731px;font-size:19.5px;line-height:19.5px;color:#000;transform:scaleX(1.0281);transform-origin:100% 50%;-webkit-text-stroke:0.22px #000;">2240</span>
<span class="t" style="left:1381.02px;top:731px;font-size:19.5px;line-height:19.5px;color:#000;transform:scaleX(1.0281);transform-origin:100% 50%;-webkit-text-stroke:0.22px #000;">2345</span>
<span class="t" style="left:1509.55px;top:731px;font-size:19.5px;line-height:19.5px;color:#000;transform:scaleX(1.0281);transform-origin:100% 50%;-webkit-text-stroke:0.22px #000;">3</span>
<span class="t" style="left:64.29px;top:760px;font-size:19.5px;line-height:19.5px;color:#000;transform:scaleX(1.1053);transform-origin:100% 50%;-webkit-text-stroke:0.22px #000;">1/1/2018</span>
<span class="t" style="left:147.10px;top:760px;font-size:19.5px;line-height:19.5px;color:#000;transform:scaleX(0.9910);transform-origin:0 50%;-webkit-text-stroke:0.22px #000;">UA</span>
<span class="t" style="left:431.52px;top:760px;font-size:19.5px;line-height:19.5px;color:#000;transform:scaleX(1.0281);transform-origin:100% 50%;-webkit-text-stroke:0.22px #000;">2168</span>
<span class="t" style="left:481.60px;top:760px;font-size:19.5px;line-height:19.5px;color:#000;transform:scaleX(0.9346);transform-origin:0 50%;-webkit-text-stroke:0.22px #000;">DEN</span>
<span class="t" style="left:568.10px;top:760px;font-size:19.5px;line-height:19.5px;color:#000;transform:scaleX(0.8912);transform-origin:0 50%;-webkit-text-stroke:0.22px #000;">ICT</span>
<span class="t" style="left:751.02px;top:760px;font-size:19.5px;line-height:19.5px;color:#000;transform:scaleX(1.0281);transform-origin:100% 50%;-webkit-text-stroke:0.22px #000;">2018</span>
<span class="t" style="left:873.02px;top:760px;font-size:19.5px;line-height:19.5px;color:#000;transform:scaleX(1.0281);transform-origin:100% 50%;-webkit-text-stroke:0.22px #000;">2017</span>
<span class="t" style="left:1028.06px;top:760px;font-size:19.5px;line-height:19.5px;color:#000;transform:scaleX(1.0315);transform-origin:100% 50%;-webkit-text-stroke:0.22px #000;">-1</span>
<span class="t" style="left:1134.21px;top:760px;font-size:19.5px;line-height:19.5px;color:#000;transform:scaleX(1.0281);transform-origin:100% 50%;-webkit-text-stroke:0.22px #000;">13</span>
<span class="t" style="left:1248.02px;top:760px;font-size:19.5px;line-height:19.5px;color:#000;transform:scaleX(1.0281);transform-origin:100% 50%;-webkit-text-stroke:0.22px #000;">2030</span>
<span class="t" style="left:1381.02px;top:760px;font-size:19.5px;line-height:19.5px;color:#000;transform:scaleX(1.0281);transform-origin:100% 50%;-webkit-text-stroke:0.22px #000;">2221</span>
<span class="t" style="left:1509.55px;top:760px;font-size:19.5px;line-height:19.5px;color:#000;transform:scaleX(1.0281);transform-origin:100% 50%;-webkit-text-stroke:0.22px #000;">4</span>
<span class="t" style="left:64.29px;top:789px;font-size:19.5px;line-height:19.5px;color:#000;transform:scaleX(1.1053);transform-origin:100% 50%;-webkit-text-stroke:0.22px #000;">1/1/2018</span>
<span class="t" style="left:147.10px;top:789px;font-size:19.5px;line-height:19.5px;color:#000;transform:scaleX(0.9910);transform-origin:0 50%;-webkit-text-stroke:0.22px #000;">UA</span>
<span class="t" style="left:431.52px;top:789px;font-size:19.5px;line-height:19.5px;color:#000;transform:scaleX(1.0281);transform-origin:100% 50%;-webkit-text-stroke:0.22px #000;">2166</span>
<span class="t" style="left:481.60px;top:789px;font-size:19.5px;line-height:19.5px;color:#000;transform:scaleX(0.9390);transform-origin:0 50%;-webkit-text-stroke:0.22px #000;">ANC</span>
<span class="t" style="left:568.10px;top:789px;font-size:19.5px;line-height:19.5px;color:#000;transform:scaleX(0.9346);transform-origin:0 50%;-webkit-text-stroke:0.22px #000;">DEN</span>
<span class="t" style="left:751.02px;top:789px;font-size:19.5px;line-height:19.5px;color:#000;transform:scaleX(1.0281);transform-origin:100% 50%;-webkit-text-stroke:0.22px #000;">2340</span>
<span class="t" style="left:873.02px;top:789px;font-size:19.5px;line-height:19.5px;color:#000;transform:scaleX(1.0281);transform-origin:100% 50%;-webkit-text-stroke:0.22px #000;">2336</span>
<span class="t" style="left:1028.06px;top:789px;font-size:19.5px;line-height:19.5px;color:#000;transform:scaleX(1.0315);transform-origin:100% 50%;-webkit-text-stroke:0.22px #000;">-4</span>
<span class="t" style="left:1134.21px;top:789px;font-size:19.5px;line-height:19.5px;color:#000;transform:scaleX(1.0281);transform-origin:100% 50%;-webkit-text-stroke:0.22px #000;">13</span>
<span class="t" style="left:1248.02px;top:789px;font-size:19.5px;line-height:19.5px;color:#000;transform:scaleX(1.0281);transform-origin:100% 50%;-webkit-text-stroke:0.22px #000;">2349</span>
<span class="t" style="left:1391.86px;top:789px;font-size:19.5px;line-height:19.5px;color:#000;transform:scaleX(1.0281);transform-origin:100% 50%;-webkit-text-stroke:0.22px #000;">623</span>
<span class="t" style="left:1509.55px;top:789px;font-size:19.5px;line-height:19.5px;color:#000;transform:scaleX(1.0281);transform-origin:100% 50%;-webkit-text-stroke:0.22px #000;">6</span>
<span class="t" style="left:64.29px;top:818px;font-size:19.5px;line-height:19.5px;color:#000;transform:scaleX(1.1053);transform-origin:100% 50%;-webkit-text-stroke:0.22px #000;">1/1/2018</span>
<span class="t" style="left:147.10px;top:818px;font-size:19.5px;line-height:19.5px;color:#000;transform:scaleX(0.9910);transform-origin:0 50%;-webkit-text-stroke:0.22px #000;">UA</span>
<span class="t" style="left:431.52px;top:818px;font-size:19.5px;line-height:19.5px;color:#000;transform:scaleX(1.0281);transform-origin:100% 50%;-webkit-text-stroke:0.22px #000;">2164</span>
<span class="t" style="left:481.60px;top:818px;font-size:19.5px;line-height:19.5px;color:#000;transform:scaleX(0.9209);transform-origin:0 50%;-webkit-text-stroke:0.22px #000;">ALB</span>
<span class="t" style="left:568.10px;top:818px;font-size:19.5px;line-height:19.5px;color:#000;transform:scaleX(0.9242);transform-origin:0 50%;-webkit-text-stroke:0.22px #000;">ORD</span>
<span class="t" style="left:751.02px;top:818px;font-size:19.5px;line-height:19.5px;color:#000;transform:scaleX(1.0281);transform-origin:100% 50%;-webkit-text-stroke:0.22px #000;">1004</span>
<span class="t" style="left:873.02px;top:818px;font-size:19.5px;line-height:19.5px;color:#000;transform:scaleX(1.0281);transform-origin:100% 50%;-webkit-text-stroke:0.22px #000;">1022</span>
<span class="t" style="left:1023.71px;top:818px;font-size:19.5px;line-height:19.5px;color:#000;transform:scaleX(1.0281);transform-origin:100% 50%;-webkit-text-stroke:0.22px #000;">18</span>
<span class="t" style="left:1145.05px;top:818px;font-size:19.5px;line-height:19.5px;color:#000;transform:scaleX(1.0281);transform-origin:100% 50%;-webkit-text-stroke:0.22px #000;">8</span>
<span class="t" style="left:1248.02px;top:818px;font-size:19.5px;line-height:19.5px;color:#000;transform:scaleX(1.0281);transform-origin:100% 50%;-webkit-text-stroke:0.22px #000;">1030</span>
<span class="t" style="left:1383.91px;top:818px;font-size:19.5px;line-height:19.5px;color:#000;transform:scaleX(1.1016);transform-origin:100% 50%;-webkit-text-stroke:0.22px #000;">1116</span>
<span class="t" style="left:1509.55px;top:818px;font-size:19.5px;line-height:19.5px;color:#000;transform:scaleX(1.0281);transform-origin:100% 50%;-webkit-text-stroke:0.22px #000;">8</span>
<span class="t" style="left:64.29px;top:847px;font-size:19.5px;line-height:19.5px;color:#000;transform:scaleX(1.1053);transform-origin:100% 50%;-webkit-text-stroke:0.22px #000;">1/1/2018</span>
<span class="t" style="left:147.10px;top:847px;font-size:19.5px;line-height:19.5px;color:#000;transform:scaleX(0.9910);transform-origin:0 50%;-webkit-text-stroke:0.22px #000;">UA</span>
<span class="t" style="left:431.52px;top:847px;font-size:19.5px;line-height:19.5px;color:#000;transform:scaleX(1.0281);transform-origin:100% 50%;-webkit-text-stroke:0.22px #000;">2162</span>
<span class="t" style="left:481.60px;top:847px;font-size:19.5px;line-height:19.5px;color:#000;transform:scaleX(0.8677);transform-origin:0 50%;-webkit-text-stroke:0.22px #000;">SFO</span>
<span class="t" style="left:568.10px;top:847px;font-size:19.5px;line-height:19.5px;color:#000;transform:scaleX(0.9167);transform-origin:0 50%;-webkit-text-stroke:0.22px #000;">EUG</span>
<span class="t" style="left:751.02px;top:847px;font-size:19.5px;line-height:19.5px;color:#000;transform:scaleX(1.0281);transform-origin:100% 50%;-webkit-text-stroke:0.22px #000;">2013</span>
<span class="t" style="left:873.02px;top:847px;font-size:19.5px;line-height:19.5px;color:#000;transform:scaleX(1.0281);transform-origin:100% 50%;-webkit-text-stroke:0.22px #000;">2003</span>
<span class="t" style="left:1017.21px;top:847px;font-size:19.5px;line-height:19.5px;color:#000;transform:scaleX(1.0302);transform-origin:100% 50%;-webkit-text-stroke:0.22px #000;">-10</span>
<span class="t" style="left:1134.21px;top:847px;font-size:19.5px;line-height:19.5px;color:#000;transform:scaleX(1.0281);transform-origin:100% 50%;-webkit-text-stroke:0.22px #000;">19</span>
<span class="t" style="left:1248.02px;top:847px;font-size:19.5px;line-height:19.5px;color:#000;transform:scaleX(1.0281);transform-origin:100% 50%;-webkit-text-stroke:0.22px #000;">2022</span>
<span class="t" style="left:1381.02px;top:847px;font-size:19.5px;line-height:19.5px;color:#000;transform:scaleX(1.0281);transform-origin:100% 50%;-webkit-text-stroke:0.22px #000;">2132</span>
<span class="t" style="left:1509.55px;top:847px;font-size:19.5px;line-height:19.5px;color:#000;transform:scaleX(1.0281);transform-origin:100% 50%;-webkit-text-stroke:0.22px #000;">9</span>
<div class="a" style="left:38px;top:27px;width:107px;height:32px;border:2px solid #1f7246;box-sizing:border-box;"></div>
<div class="a" style="left:40px;top:29px;width:103px;height:28px;border:1px solid rgba(255,255,255,.8);box-sizing:border-box;"></div>
<div class="a" style="left:139px;top:53px;width:7px;height:7px;background:#1f7246;border-left:1px solid #fff;border-top:1px solid #fff;box-sizing:border-box;"></div>
<div class="a" style="left:0px;top:872px;width:1605px;height:1px;background:#d9d9d9;"></div>
<div class="a" style="left:1604px;top:0px;width:1px;height:873px;background:#dcdcdc;"></div>
</div>
<div class="a" style="left:1607px;top:322px;width:26px;height:876px;background:#f5f5f5;border-radius:13px;"></div>
<svg class="a" style="left:1612.5px;top:329.5px;" width="15" height="11" viewBox="0 0 15 11"><path d="M7.5 2 L12.8 9 H2.2 Z" fill="#747474" stroke="#747474" stroke-width="2.2" stroke-linejoin="round"/></svg>
<div class="a" style="left:1614px;top:347.7px;width:12px;height:26.4px;background:#707070;border-radius:6px;"></div>
<svg class="a" style="left:1612.5px;top:1179.5px;" width="15" height="11" viewBox="0 0 15 11"><path d="M7.5 9.2 L12.8 2 H2.2 Z" fill="#747474" stroke="#747474" stroke-width="2.2" stroke-linejoin="round"/></svg>
<svg class="a" style="left:33px;top:1208px;" width="14" height="19" viewBox="0 0 14 19"><path d="M11 1.5 L2.5 9.5 L11 17.5" fill="none" stroke="#8e958a" stroke-width="1.7"/></svg>
<svg class="a" style="left:81.5px;top:1208px;" width="14" height="19" viewBox="0 0 14 19"><path d="M3 1.5 L11.5 9.5 L3 17.5" fill="none" stroke="#8e958a" stroke-width="1.7"/></svg>
<div class="a" style="left:166px;top:1195px;width:90.5px;height:41.5px;background:#fff;border-radius:7px 7px 7px 7px;box-shadow:0 0.5px 1.5px rgba(0,0,0,.18);"></div>
<span class="t" style="left:178.10px;top:1205px;font-size:20.5px;line-height:20.5px;color:#1f1f1f;transform:scaleX(0.9892);transform-origin:0 50%;-webkit-text-stroke:0.5px #1f1f1f;">Query1</span>
<div class="a" style="left:178.3px;top:1229.5px;width:66px;height:3px;background:#107c41;border-radius:1px;"></div>
<div class="a" style="left:262.0px;top:1205px;width:1.2px;height:27px;background:#cfd6c5;"></div>
<div class="a" style="left:332.8px;top:1205px;width:1.2px;height:27px;background:#cfd6c5;"></div>
<div class="a" style="left:432.0px;top:1205px;width:1.2px;height:27px;background:#cfd6c5;"></div>
<span class="t" style="left:281.60px;top:1211px;font-size:20.5px;line-height:20.5px;color:#333;transform:scaleX(1.0347);transform-origin:0 50%;">dev</span>
<span class="t" style="left:351.80px;top:1211px;font-size:20.5px;line-height:20.5px;color:#333;transform:scaleX(0.9727);transform-origin:0 50%;">Sheet1</span>
<svg class="a" style="left:495.5px;top:1209px;" width="18" height="18" viewBox="0 0 18 18"><path d="M9 1 V17 M1 9 H17" stroke="#333" stroke-width="1.4"/></svg>
<div class="a" style="left:984.2px;top:1212px;width:3.7px;height:3px;background:#2a2a2a;"></div>
<div class="a" style="left:984.2px;top:1218px;width:3.7px;height:3px;background:#2a2a2a;"></div>
<div class="a" style="left:984.2px;top:1224px;width:3.7px;height:3px;background:#2a2a2a;"></div>
<div class="a" style="left:1010px;top:1205px;width:597px;height:26px;background:#f5f5f5;border-radius:13px;"></div>
<svg class="a" style="left:1016.5px;top:1211px;" width="12" height="14" viewBox="0 0 12 14"><path d="M9.8 2.2 V11.8 L2.2 7 Z" fill="#747474" stroke="#747474" stroke-width="2.2" stroke-linejoin="round"/></svg>
<div class="a" style="left:1035.7px;top:1211.7px;width:181.5px;height:12.3px;background:#717171;border-radius:6.2px;"></div>
<svg class="a" style="left:1588.5px;top:1211px;" width="12" height="14" viewBox="0 0 12 14"><path d="M2.2 2.2 V11.8 L9.8 7 Z" fill="#747474" stroke="#747474" stroke-width="2.2" stroke-linejoin="round"/></svg>
<div class="a" style="left:0px;top:1242.7px;width:2156px;height:31.3px;background:#f5f5f5;"></div>
<div class="a" style="left:0px;top:1242.7px;width:2156px;height:1.3px;background:#fdfdfd;"></div>
<span class="t" style="left:16.10px;top:1253px;font-size:15.8px;line-height:15.8px;color:#444;transform:scaleX(0.9459);transform-origin:0 50%;">Ready</span>
<svg class="a" style="left:87px;top:1249px;" width="23" height="23" viewBox="0 0 23 23"><g fill="none" stroke-linecap="round" stroke-linejoin="round"><path d="M2.3 5.8 L9.5 9.2 L16.9 5.8 M9.5 9.2 V13.6 L6.2 19.6 M9.5 13.8 L11 16" stroke="#2b2b2b" stroke-width="4.3"/><path d="M2.3 5.8 L9.5 9.2 L16.9 5.8 M9.5 9.2 V13.6 L6.2 19.6 M9.5 13.8 L11 16" stroke="#f5f5f5" stroke-width="1.9"/></g>
<circle cx="9.5" cy="3.9" r="2.7" fill="#f5f5f5" stroke="#2b2b2b" stroke-width="1.25"/>
<path d="M12.8 14 L21 21.2 M21 14 L12.8 21.2" stroke="#f5f5f5" stroke-width="3.6"/><path d="M12.8 14 L21 21.2 M21 14 L12.8 21.2" stroke="#2b2b2b" stroke-width="1.5"/></svg>
<span class="t" style="left:114.00px;top:1253px;font-size:15.4px;line-height:15.4px;color:#333;font-weight:700;transform:scaleX(1.0238);transform-origin:0 50%;">Accessibility: Investigate</span>
<div class="a" style="left:1715px;top:1244px;width:60px;height:30px;background:#dcdcdc;"></div>
<svg class="a" style="left:1734px;top:1249px;" width="21" height="20" viewBox="0 0 21 20"><rect x="0.8" y="0.8" width="19" height="18.4" fill="none" stroke="#333" stroke-width="1.5"/><path d="M0.8 7 H19.8 M0.8 13 H19.8 M7.2 0.8 V19.2 M13.4 0.8 V19.2" stroke="#333" stroke-width="1.5"/></svg>
<svg class="a" style="left:1794px;top:1249px;" width="23" height="20" viewBox="0 0 23 20"><rect x="0.8" y="0.8" width="20.5" height="18.4" fill="none" stroke="#333" stroke-width="1.5"/><rect x="5.8" y="4" width="10.4" height="12" fill="none" stroke="#333" stroke-width="1.4"/><path d="M8.2 7.6 H13.8 M8.2 10 H13.8 M8.2 12.4 H13.8" stroke="#333" stroke-width="1.2"/></svg>
<svg class="a" style="left:1854px;top:1249px;" width="23" height="20" viewBox="0 0 23 20"><rect x="0.8" y="0.8" width="20.5" height="18.4" fill="none" stroke="#333" stroke-width="1.5"/><path d="M0.8 10.5 H15 V0.8 M8 0.8 V10.5" fill="none" stroke="#333" stroke-width="1.4"/></svg>
<div class="a" style="left:1903.3px;top:1258.7px;width:11px;height:1.5px;background:#444;"></div>
<div class="a" style="left:1923.3px;top:1258.5px;width:147.7px;height:2px;background:#6a6a6a;"></div>
<div class="a" style="left:1993.3px;top:1251px;width:8px;height:16.5px;background:#5e5e5e;"></div>
<svg class="a" style="left:2078.5px;top:1253.5px;" width="13" height="13" viewBox="0 0 13 13"><path d="M6.5 0.5 V12.5 M0.5 6.5 H12.5" stroke="#444" stroke-width="1.3"/></svg>
<span class="t" style="left:2109.70px;top:1253px;font-size:15.8px;line-height:15.8px;color:#444;transform:scaleX(0.9799);transform-origin:0 50%;">100%</span>
</body></html>
